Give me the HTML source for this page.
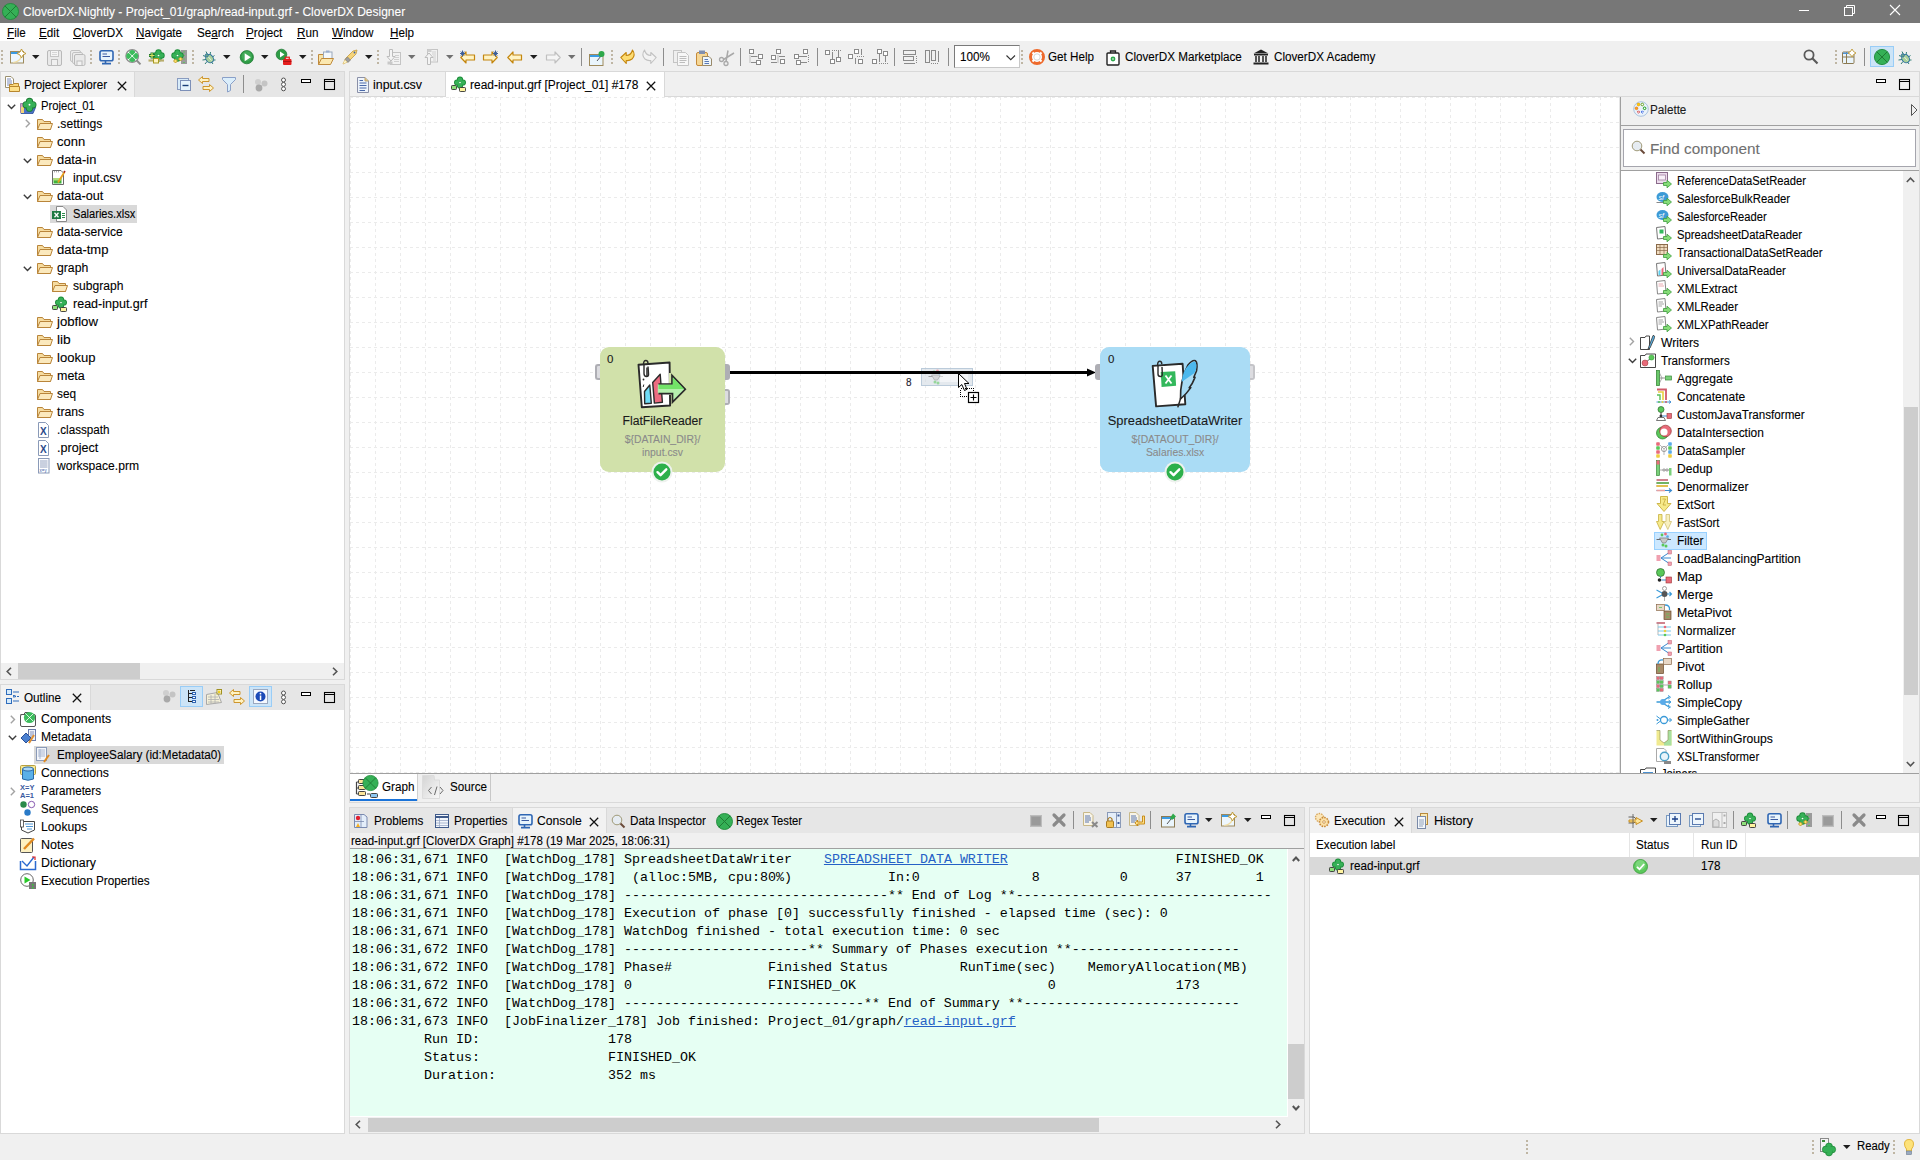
<!DOCTYPE html>
<html><head><meta charset="utf-8"><title>CloverDX Designer</title>
<style>
html,body{margin:0;padding:0;}
body{width:1920px;height:1160px;position:relative;overflow:hidden;background:#f0f0f0;font-family:"Liberation Sans",sans-serif;font-size:11.7px;color:#000;}
.t{position:absolute;white-space:pre;line-height:18px;height:18px;-webkit-text-stroke:0.1px currentColor;}
.lk{color:#2561c6;text-decoration:underline;}
.m{position:absolute;white-space:pre;font-family:"Liberation Mono",monospace;font-size:13.333px;line-height:18px;}
svg{position:absolute;overflow:visible;}
</style></head><body>

<div style="position:absolute;left:0px;top:0px;width:1920px;height:23px;background:#777777;"></div>
<div class="t" style="left:23px;top:3px;font-size:12px;color:#fff;">CloverDX-Nightly - Project_01/graph/read-input.grf - CloverDX Designer</div>
<div style="position:absolute;left:1799px;top:10px;width:10px;height:1px;background:#fff;"></div>
<svg style="position:absolute;left:1843px;top:4px;" width="14" height="14" viewBox="0 0 14 14"><rect x="1.5" y="3.5" width="8" height="8" fill="none" stroke="#fff"/><path d="M3.5 3.5V1.5h8v8h-2" fill="none" stroke="#fff"/></svg>
<svg style="position:absolute;left:1889px;top:4px;" width="13" height="13" viewBox="0 0 13 13"><path d="M1 1L11 11M11 1L1 11" stroke="#fff" stroke-width="1.1"/></svg>
<div style="position:absolute;left:0px;top:23px;width:1920px;height:18px;background:#fff;"></div>
<div class="t" style="left:7px;top:24px;font-size:12.3px;color:#000;transform:scaleX(0.95);transform-origin:0 0;"><u>F</u>ile</div>
<div class="t" style="left:39px;top:24px;font-size:12.3px;color:#000;transform:scaleX(0.95);transform-origin:0 0;"><u>E</u>dit</div>
<div class="t" style="left:73px;top:24px;font-size:12.3px;color:#000;transform:scaleX(0.95);transform-origin:0 0;"><u>C</u>loverDX</div>
<div class="t" style="left:136px;top:24px;font-size:12.3px;color:#000;transform:scaleX(0.95);transform-origin:0 0;"><u>N</u>avigate</div>
<div class="t" style="left:197px;top:24px;font-size:12.3px;color:#000;transform:scaleX(0.95);transform-origin:0 0;">Se<u>a</u>rch</div>
<div class="t" style="left:246px;top:24px;font-size:12.3px;color:#000;transform:scaleX(0.95);transform-origin:0 0;"><u>P</u>roject</div>
<div class="t" style="left:297px;top:24px;font-size:12.3px;color:#000;transform:scaleX(0.95);transform-origin:0 0;"><u>R</u>un</div>
<div class="t" style="left:332px;top:24px;font-size:12.3px;color:#000;transform:scaleX(0.95);transform-origin:0 0;"><u>W</u>indow</div>
<div class="t" style="left:390px;top:24px;font-size:12.3px;color:#000;transform:scaleX(0.95);transform-origin:0 0;"><u>H</u>elp</div>
<div style="position:absolute;left:1px;top:72px;width:343px;height:25px;background:#e6e6e6;"></div>
<div style="position:absolute;left:1px;top:72px;width:133px;height:25px;background:#f2f2f2;"></div>
<div style="position:absolute;left:134px;top:72px;width:1px;height:25px;background:#d9d9d9;"></div>
<div style="position:absolute;left:1px;top:97px;width:343px;height:566px;background:#fff;"></div>
<div style="position:absolute;left:1px;top:663px;width:343px;height:16px;background:#f0f0f0;"></div>
<div style="position:absolute;left:18px;top:663px;width:122px;height:16px;background:#cdcdcd;"></div>
<div style="position:absolute;left:0px;top:71px;width:345px;height:609px;box-sizing:border-box;border:1px solid #d9d9d9;"></div>
<div style="position:absolute;left:1px;top:685px;width:343px;height:25px;background:#e6e6e6;"></div>
<div style="position:absolute;left:1px;top:685px;width:89px;height:25px;background:#f2f2f2;"></div>
<div style="position:absolute;left:90px;top:685px;width:1px;height:25px;background:#d9d9d9;"></div>
<div style="position:absolute;left:1px;top:710px;width:343px;height:423px;background:#fff;"></div>
<div style="position:absolute;left:0px;top:684px;width:345px;height:450px;box-sizing:border-box;border:1px solid #d9d9d9;"></div>
<div style="position:absolute;left:350px;top:72px;width:1569px;height:25px;background:#f0f0f0;"></div>
<div style="position:absolute;left:446px;top:72px;width:218px;height:25px;background:#fff;"></div>
<div style="position:absolute;left:445px;top:72px;width:1px;height:25px;background:#d9d9d9;"></div>
<div style="position:absolute;left:664px;top:72px;width:1px;height:25px;background:#d9d9d9;"></div>
<div style="position:absolute;left:350px;top:96px;width:1569px;height:1px;background:#d9d9d9;"></div>
<div style="position:absolute;left:446px;top:96px;width:218px;height:1px;background:#fff;"></div>
<div style="position:absolute;left:349px;top:71px;width:1571px;height:732px;box-sizing:border-box;border:1px solid #d9d9d9;"></div>
<div style="position:absolute;left:350px;top:97px;width:1270px;height:676px;background:#fff;"></div>
<div style="position:absolute;left:350px;top:773px;width:1569px;height:1px;background:#a0a0a0;"></div>
<div style="position:absolute;left:1619px;top:97px;width:1px;height:676px;background:#e4e4e4;"></div>
<div style="position:absolute;left:1620px;top:97px;width:1px;height:676px;background:#a0a0a0;"></div>
<div style="position:absolute;left:1621px;top:97px;width:298px;height:28px;background:#f0f0f0;"></div>
<div style="position:absolute;left:1621px;top:125px;width:298px;height:1px;background:#a0a0a0;"></div>
<div style="position:absolute;left:1621px;top:126px;width:298px;height:44px;background:#f0f0f0;"></div>
<div style="position:absolute;left:1623px;top:129px;width:293px;height:38px;box-sizing:border-box;background:#fff;border:1px solid #a5a5ad;"></div>
<div style="position:absolute;left:1621px;top:170px;width:298px;height:1px;background:#a0a0a0;"></div>
<div style="position:absolute;left:1621px;top:171px;width:298px;height:602px;background:#fff;"></div>
<div style="position:absolute;left:1903px;top:171px;width:16px;height:602px;background:#f0f0f0;"></div>
<div style="position:absolute;left:1904px;top:407px;width:14px;height:288px;background:#cdcdcd;"></div>
<div style="position:absolute;left:350px;top:774px;width:1569px;height:28px;background:#f0f0f0;"></div>
<div style="position:absolute;left:350px;top:774px;width:67px;height:27px;background:#fff;"></div>
<div style="position:absolute;left:350px;top:799px;width:67px;height:2px;background:#1a73d9;"></div>
<div style="position:absolute;left:417px;top:774px;width:1px;height:27px;background:#d0d0d0;"></div>
<div style="position:absolute;left:490px;top:774px;width:1px;height:27px;background:#c8c8c8;"></div>
<div style="position:absolute;left:350px;top:808px;width:954px;height:25px;background:#e6e6e6;"></div>
<div style="position:absolute;left:513px;top:808px;width:93px;height:25px;background:#f2f2f2;"></div>
<div style="position:absolute;left:512px;top:808px;width:1px;height:25px;background:#d9d9d9;"></div>
<div style="position:absolute;left:606px;top:808px;width:1px;height:25px;background:#d9d9d9;"></div>
<div style="position:absolute;left:350px;top:833px;width:954px;height:15px;background:#f0f0f0;"></div>
<div style="position:absolute;left:350px;top:848px;width:954px;height:1px;background:#a0a0a0;"></div>
<div style="position:absolute;left:350px;top:849px;width:938px;height:268px;background:#fff;"></div>
<div style="position:absolute;left:350px;top:849px;width:937px;height:267px;background:#e6fff3;"></div>
<div style="position:absolute;left:1288px;top:849px;width:16px;height:268px;background:#f0f0f0;"></div>
<div style="position:absolute;left:1288px;top:1044px;width:16px;height:55px;background:#cdcdcd;"></div>
<div style="position:absolute;left:350px;top:1117px;width:954px;height:16px;background:#f0f0f0;"></div>
<div style="position:absolute;left:368px;top:1118px;width:731px;height:14px;background:#cdcdcd;"></div>
<div style="position:absolute;left:349px;top:807px;width:956px;height:327px;box-sizing:border-box;border:1px solid #d9d9d9;"></div>
<div style="position:absolute;left:1310px;top:808px;width:609px;height:25px;background:#e6e6e6;"></div>
<div style="position:absolute;left:1310px;top:808px;width:101px;height:25px;background:#f2f2f2;"></div>
<div style="position:absolute;left:1411px;top:808px;width:1px;height:25px;background:#d9d9d9;"></div>
<div style="position:absolute;left:1310px;top:833px;width:609px;height:300px;background:#fff;"></div>
<div style="position:absolute;left:1310px;top:857px;width:609px;height:18px;background:#d9d9d9;"></div>
<div style="position:absolute;left:1629px;top:833px;width:1px;height:24px;background:#e5e5e5;"></div>
<div style="position:absolute;left:1693px;top:833px;width:1px;height:24px;background:#e5e5e5;"></div>
<div style="position:absolute;left:1745px;top:833px;width:1px;height:24px;background:#e5e5e5;"></div>
<div style="position:absolute;left:1309px;top:807px;width:611px;height:327px;box-sizing:border-box;border:1px solid #d9d9d9;"></div>
<svg style="position:absolute;left:350px;top:97px;overflow:hidden;" width="1270" height="676" viewBox="0 0 1270 676"><path d="M0.5 0V676M25.5 0V676M50.5 0V676M75.5 0V676M100.5 0V676M125.5 0V676M150.5 0V676M175.5 0V676M200.5 0V676M225.5 0V676M250.5 0V676M275.5 0V676M300.5 0V676M325.5 0V676M350.5 0V676M375.5 0V676M400.5 0V676M425.5 0V676M450.5 0V676M475.5 0V676M500.5 0V676M525.5 0V676M550.5 0V676M575.5 0V676M600.5 0V676M625.5 0V676M650.5 0V676M675.5 0V676M700.5 0V676M725.5 0V676M750.5 0V676M775.5 0V676M800.5 0V676M825.5 0V676M850.5 0V676M875.5 0V676M900.5 0V676M925.5 0V676M950.5 0V676M975.5 0V676M1000.5 0V676M1025.5 0V676M1050.5 0V676M1075.5 0V676M1100.5 0V676M1125.5 0V676M1150.5 0V676M1175.5 0V676M1200.5 0V676M1225.5 0V676M1250.5 0V676" stroke="#ebebeb" stroke-width="1" stroke-dasharray="3 3" shape-rendering="crispEdges"/><path d="M0 0.5H1270M0 25.5H1270M0 50.5H1270M0 75.5H1270M0 100.5H1270M0 125.5H1270M0 150.5H1270M0 175.5H1270M0 200.5H1270M0 225.5H1270M0 250.5H1270M0 275.5H1270M0 300.5H1270M0 325.5H1270M0 350.5H1270M0 375.5H1270M0 400.5H1270M0 425.5H1270M0 450.5H1270M0 475.5H1270M0 500.5H1270M0 525.5H1270M0 550.5H1270M0 575.5H1270M0 600.5H1270M0 625.5H1270M0 650.5H1270M0 675.5H1270" stroke="#ebebeb" stroke-width="1" stroke-dasharray="3 3" shape-rendering="crispEdges"/></svg>
<div style="position:absolute;left:730px;top:371px;width:360px;height:3px;background:#000;"></div>
<svg style="position:absolute;left:1087px;top:368px;" width="10" height="10" viewBox="0 0 10 10"><path d="M0 0.5L9 4.5L0 8.5Z" fill="#000"/></svg>
<div class="t" style="left:906px;top:374px;font-size:10px;color:#1a1a30;">8</div>
<div style="position:absolute;left:595px;top:364px;width:5px;height:16px;box-sizing:border-box;background:#dcdce0;border:solid #aeaeb4;border-width:2px 0 2px 2px;border-radius:3px 0 0 3px;"></div>
<div style="position:absolute;left:725px;top:364px;width:5px;height:16px;background:#aeaeb4;border-radius:0 3px 3px 0;"></div>
<div style="position:absolute;left:725px;top:389px;width:5px;height:16px;box-sizing:border-box;background:#dcdce0;border:solid #aeaeb4;border-width:2px 2px 2px 0;border-radius:0 3px 3px 0;"></div>
<div style="position:absolute;left:600px;top:347px;width:125px;height:125px;background:#d1e1aa;border-radius:9px;"></div>
<div class="t" style="left:607px;top:350px;font-size:11.5px;color:#1a1a1a;">0</div>
<div class="t" style="left:600px;top:412px;font-size:12.3px;color:#1a1a1a;transform:scaleX(0.99);transform-origin:center;width:125px;text-align:center;">FlatFileReader</div>
<div class="t" style="left:600px;top:430px;font-size:11.4px;color:#8a8a8a;transform:scaleX(0.91);transform-origin:center;width:125px;text-align:center;">${DATAIN_DIR}/</div>
<div class="t" style="left:600px;top:443px;font-size:11.4px;color:#8a8a8a;transform:scaleX(0.91);transform-origin:center;width:125px;text-align:center;">input.csv</div>
<div style="position:absolute;left:1095px;top:364px;width:5px;height:16px;background:#aeaeb4;border-radius:3px 0 0 3px;"></div>
<div style="position:absolute;left:1250px;top:364px;width:5px;height:16px;box-sizing:border-box;background:#dcdce0;border:solid #c4c4c8;border-width:2px 2px 2px 0;border-radius:0 3px 3px 0;"></div>
<div style="position:absolute;left:1100px;top:347px;width:150px;height:125px;background:#aadcf5;border-radius:9px;"></div>
<div class="t" style="left:1108px;top:350px;font-size:11.5px;color:#1a1a1a;">0</div>
<div class="t" style="left:1100px;top:412px;font-size:12.9px;color:#1a1a1a;width:150px;text-align:center;">SpreadsheetDataWriter</div>
<div class="t" style="left:1100px;top:430px;font-size:11.4px;color:#8a8a8a;transform:scaleX(0.91);transform-origin:center;width:150px;text-align:center;">${DATAOUT_DIR}/</div>
<div class="t" style="left:1100px;top:443px;font-size:11.4px;color:#8a8a8a;transform:scaleX(0.91);transform-origin:center;width:150px;text-align:center;">Salaries.xlsx</div>
<svg style="position:absolute;left:651px;top:461px;" width="22" height="22" viewBox="0 0 22 22"><circle cx="11" cy="11" r="10.5" fill="#eef2ee"/><circle cx="11" cy="11" r="8.5" fill="#2db04b"/><path d="M6.5 11.2L9.6 14.2L15.3 8.3" fill="none" stroke="#fff" stroke-width="2.4" stroke-linecap="round" stroke-linejoin="round"/></svg>
<svg style="position:absolute;left:1164px;top:461px;" width="22" height="22" viewBox="0 0 22 22"><circle cx="11" cy="11" r="10.5" fill="#eef2ee"/><circle cx="11" cy="11" r="8.5" fill="#2db04b"/><path d="M6.5 11.2L9.6 14.2L15.3 8.3" fill="none" stroke="#fff" stroke-width="2.4" stroke-linecap="round" stroke-linejoin="round"/></svg>
<svg style="position:absolute;left:630px;top:355px;" width="64" height="56" viewBox="0 0 64 56">
<path d="M8.5 9.7L39.6 7.5L40.1 50.5L11.8 52.2Z" fill="#fff" stroke="#2a2a2a" stroke-width="1.9" stroke-linejoin="round"/>
<path d="M14.5 36.5L19.8 30L21.3 48.3L14.7 48.8Z" fill="#6fdcf7"/>
<path d="M22.7 27.5L30.2 19.3L30.9 28.5L32.4 47.3L24.4 48.1Z" fill="#ec6b80" stroke="#2a2a2a" stroke-width="1.4" stroke-linejoin="round"/>
<path d="M14.5 36.5L19.8 30L21.3 48.3L14.7 48.8Z" fill="none" stroke="#2a2a2a" stroke-width="1.4" stroke-linejoin="round"/>
<path d="M17 21.5V12.5" stroke="#2a2a2a" stroke-width="1.5" fill="none"/>
<path d="M14 9.5V18.5Q14 21.5 16.5 21.5Q19 21.5 18.5 18.5L18 11.5" stroke="#2a2a2a" stroke-width="1.4" fill="none"/>
<path d="M13.5 9.5Q13.5 5.5 15.8 5.5Q18 5.5 18 8.5" stroke="#2a2a2a" stroke-width="1.4" fill="none"/>
<rect x="39" y="18" width="4" height="22" fill="#d1e1aa"/>
<path d="M27.8 29H42V20.3L55.3 34.3L42.5 47.1V38.6H27.8Z" fill="#b6efae"/><path d="M28.5 29H42V20.3L55.3 34.3L42.5 47.1V38.6H28.5" fill="none" stroke="#2a2a2a" stroke-width="1.7" stroke-linejoin="miter"/>
<path d="M28.6 29.8H42.8V22.3L54 34H28.6Z" fill="#73e368"/>
<circle cx="13.5" cy="24.5" r="0.9" fill="#2a2a2a"/><path d="M13.8 29.5l-0.6 2.5" stroke="#2a2a2a" stroke-width="1"/>
</svg>
<svg style="position:absolute;left:1144px;top:355px;" width="64" height="56" viewBox="0 0 64 56">
<path d="M8.7 10.9L38.6 8.7L41.3 49.3L12.1 51.4Z" fill="#fff" stroke="#2a2a2a" stroke-width="1.9" stroke-linejoin="round"/>
<path d="M16.7 17.1L31.2 16.2L32.1 30.7L17.6 32.1Z" fill="#33b85c"/>
<path d="M21.5 20.5L27.5 28.5M27.5 20.5L21.5 28.5" stroke="#fff" stroke-width="1.8"/>
<path d="M14 10.5V19Q14 21.5 16.5 21.5Q18.5 21.5 18.3 19L18 12" stroke="#2a2a2a" stroke-width="1.4" fill="none"/>
<path d="M13.6 10.2Q13.6 6.3 15.8 6.3Q17.8 6.3 17.8 9.2" stroke="#2a2a2a" stroke-width="1.4" fill="none"/>
<path d="M36.5 44Q36 25 44 10Q48.5 4.5 51.5 5.8Q54 8 52.5 16L49.8 22.2L51 22.4Q48.5 29 45.2 32.8L46.8 32.6Q42 39.5 36.5 44Z" fill="#a8dcf5" stroke="#2a2a2a" stroke-width="1.6" stroke-linejoin="round"/>
<path d="M37.6 27Q39 15 44.5 10.2Q48.5 6 51 6.8Q53 8.5 52 14.5L50.5 18Z" fill="#4cb8ed"/>
<path d="M37 42L33.8 52.4" stroke="#2a2a2a" stroke-width="1.5"/>
</svg>
<div class="t" style="left:24px;top:76px;font-size:12.3px;color:#000;transform:scaleX(0.95);transform-origin:0 0;">Project Explorer</div>
<div class="t" style="left:24px;top:689px;font-size:12.3px;color:#000;transform:scaleX(0.95);transform-origin:0 0;">Outline</div>
<div class="t" style="left:373px;top:76px;font-size:12.3px;color:#000;transform:scaleX(1.01);transform-origin:0 0;">input.csv</div>
<div class="t" style="left:470px;top:76px;font-size:12.3px;color:#000;transform:scaleX(0.973);transform-origin:0 0;">read-input.grf [Project_01] #178</div>
<div class="t" style="left:1650px;top:101px;font-size:12.3px;color:#1a1a1a;transform:scaleX(0.95);transform-origin:0 0;">Palette</div>
<div class="t" style="left:1650px;top:139px;font-size:15.3px;color:#707070;line-height:20px;height:20px;">Find component</div>
<div class="t" style="left:382px;top:778px;font-size:12.3px;color:#000;transform:scaleX(0.95);transform-origin:0 0;">Graph</div>
<div class="t" style="left:450px;top:778px;font-size:12.3px;color:#000;transform:scaleX(0.95);transform-origin:0 0;">Source</div>
<div class="t" style="left:374px;top:812px;font-size:12.3px;color:#000;transform:scaleX(0.95);transform-origin:0 0;">Problems</div>
<div class="t" style="left:454px;top:812px;font-size:12.3px;color:#000;transform:scaleX(0.95);transform-origin:0 0;">Properties</div>
<div class="t" style="left:537px;top:812px;font-size:12.3px;color:#000;transform:scaleX(0.99);transform-origin:0 0;">Console</div>
<div class="t" style="left:630px;top:812px;font-size:12.3px;color:#000;transform:scaleX(0.95);transform-origin:0 0;">Data Inspector</div>
<div class="t" style="left:736px;top:812px;font-size:12.3px;color:#000;transform:scaleX(0.915);transform-origin:0 0;">Regex Tester</div>
<div class="t" style="left:351px;top:832px;font-size:12px;color:#000;transform:scaleX(0.962);transform-origin:0 0;">read-input.grf [CloverDX Graph] #178 (19 Mar 2025, 18:06:31)</div>
<div class="t" style="left:1334px;top:812px;font-size:12.3px;color:#000;transform:scaleX(0.95);transform-origin:0 0;">Execution</div>
<div class="t" style="left:1434px;top:812px;font-size:12.3px;color:#000;transform:scaleX(1.02);transform-origin:0 0;">History</div>
<div class="t" style="left:1316px;top:836px;font-size:12.3px;color:#000;transform:scaleX(0.95);transform-origin:0 0;">Execution label</div>
<div class="t" style="left:1636px;top:836px;font-size:12.3px;color:#000;transform:scaleX(0.95);transform-origin:0 0;">Status</div>
<div class="t" style="left:1701px;top:836px;font-size:12.3px;color:#000;transform:scaleX(0.95);transform-origin:0 0;">Run ID</div>
<div class="t" style="left:1350px;top:857px;font-size:12.3px;color:#000;transform:scaleX(0.95);transform-origin:0 0;">read-input.grf</div>
<div class="t" style="left:1701px;top:857px;font-size:12.3px;color:#000;transform:scaleX(0.95);transform-origin:0 0;">178</div>
<div class="t" style="left:1857px;top:1137px;font-size:12.3px;color:#000;transform:scaleX(0.92);transform-origin:0 0;">Ready</div>
<div class="t" style="left:41px;top:97px;font-size:12.3px;color:#000;transform:scaleX(0.916);transform-origin:0 0;">Project_01</div>
<div class="t" style="left:57px;top:115px;font-size:12.3px;color:#000;transform:scaleX(0.987);transform-origin:0 0;">.settings</div>
<div class="t" style="left:57px;top:133px;font-size:12.3px;color:#000;transform:scaleX(1.056);transform-origin:0 0;">conn</div>
<div class="t" style="left:57px;top:151px;font-size:12.3px;color:#000;transform:scaleX(1.045);transform-origin:0 0;">data-in</div>
<div class="t" style="left:73px;top:169px;font-size:12.3px;color:#000;transform:scaleX(1.003);transform-origin:0 0;">input.csv</div>
<div class="t" style="left:57px;top:187px;font-size:12.3px;color:#000;transform:scaleX(1.027);transform-origin:0 0;">data-out</div>
<div style="position:absolute;left:50px;top:205px;width:87px;height:18px;background:#d9d9d9;"></div>
<div class="t" style="left:73px;top:205px;font-size:12.3px;color:#000;transform:scaleX(0.902);transform-origin:0 0;">Salaries.xlsx</div>
<div class="t" style="left:57px;top:223px;font-size:12.3px;color:#000;transform:scaleX(0.98);transform-origin:0 0;">data-service</div>
<div class="t" style="left:57px;top:241px;font-size:12.3px;color:#000;transform:scaleX(1.061);transform-origin:0 0;">data-tmp</div>
<div class="t" style="left:57px;top:259px;font-size:12.3px;color:#000;transform:scaleX(0.992);transform-origin:0 0;">graph</div>
<div class="t" style="left:73px;top:277px;font-size:12.3px;color:#000;transform:scaleX(0.982);transform-origin:0 0;">subgraph</div>
<div class="t" style="left:73px;top:295px;font-size:12.3px;color:#000;transform:scaleX(1.018);transform-origin:0 0;">read-input.grf</div>
<div class="t" style="left:57px;top:313px;font-size:12.3px;color:#000;transform:scaleX(1.069);transform-origin:0 0;">jobflow</div>
<div class="t" style="left:57px;top:331px;font-size:12.3px;color:#000;transform:scaleX(1.12);transform-origin:0 0;">lib</div>
<div class="t" style="left:57px;top:349px;font-size:12.3px;color:#000;transform:scaleX(1.061);transform-origin:0 0;">lookup</div>
<div class="t" style="left:57px;top:367px;font-size:12.3px;color:#000;transform:scaleX(1.016);transform-origin:0 0;">meta</div>
<div class="t" style="left:57px;top:385px;font-size:12.3px;color:#000;transform:scaleX(0.96);transform-origin:0 0;">seq</div>
<div class="t" style="left:57px;top:403px;font-size:12.3px;color:#000;transform:scaleX(0.993);transform-origin:0 0;">trans</div>
<div class="t" style="left:57px;top:421px;font-size:12.3px;color:#000;transform:scaleX(0.948);transform-origin:0 0;">.classpath</div>
<div class="t" style="left:57px;top:439px;font-size:12.3px;color:#000;transform:scaleX(1.023);transform-origin:0 0;">.project</div>
<div class="t" style="left:57px;top:457px;font-size:12.3px;color:#000;transform:scaleX(0.984);transform-origin:0 0;">workspace.prm</div>
<div class="t" style="left:41px;top:710px;font-size:12.3px;color:#000;transform:scaleX(1.005);transform-origin:0 0;">Components</div>
<div class="t" style="left:41px;top:728px;font-size:12.3px;color:#000;transform:scaleX(0.983);transform-origin:0 0;">Metadata</div>
<div style="position:absolute;left:34px;top:746px;width:190px;height:18px;background:#d9d9d9;"></div>
<div class="t" style="left:57px;top:746px;font-size:12.3px;color:#000;transform:scaleX(0.953);transform-origin:0 0;">EmployeeSalary (id:Metadata0)</div>
<div class="t" style="left:41px;top:764px;font-size:12.3px;color:#000;transform:scaleX(0.993);transform-origin:0 0;">Connections</div>
<div class="t" style="left:41px;top:782px;font-size:12.3px;color:#000;transform:scaleX(0.944);transform-origin:0 0;">Parameters</div>
<div class="t" style="left:41px;top:800px;font-size:12.3px;color:#000;transform:scaleX(0.93);transform-origin:0 0;">Sequences</div>
<div class="t" style="left:41px;top:818px;font-size:12.3px;color:#000;transform:scaleX(0.994);transform-origin:0 0;">Lookups</div>
<div class="t" style="left:41px;top:836px;font-size:12.3px;color:#000;transform:scaleX(1.018);transform-origin:0 0;">Notes</div>
<div class="t" style="left:41px;top:854px;font-size:12.3px;color:#000;transform:scaleX(1.006);transform-origin:0 0;">Dictionary</div>
<div class="t" style="left:41px;top:872px;font-size:12.3px;color:#000;transform:scaleX(0.957);transform-origin:0 0;">Execution Properties</div>
<div class="t" style="left:1677px;top:172px;font-size:12.3px;color:#000;transform:scaleX(0.911);transform-origin:0 0;">ReferenceDataSetReader</div>
<div class="t" style="left:1677px;top:190px;font-size:12.3px;color:#000;transform:scaleX(0.924);transform-origin:0 0;">SalesforceBulkReader</div>
<div class="t" style="left:1677px;top:208px;font-size:12.3px;color:#000;transform:scaleX(0.911);transform-origin:0 0;">SalesforceReader</div>
<div class="t" style="left:1677px;top:226px;font-size:12.3px;color:#000;transform:scaleX(0.919);transform-origin:0 0;">SpreadsheetDataReader</div>
<div class="t" style="left:1677px;top:244px;font-size:12.3px;color:#000;transform:scaleX(0.921);transform-origin:0 0;">TransactionalDataSetReader</div>
<div class="t" style="left:1677px;top:262px;font-size:12.3px;color:#000;transform:scaleX(0.925);transform-origin:0 0;">UniversalDataReader</div>
<div class="t" style="left:1677px;top:280px;font-size:12.3px;color:#000;transform:scaleX(0.946);transform-origin:0 0;">XMLExtract</div>
<div class="t" style="left:1677px;top:298px;font-size:12.3px;color:#000;transform:scaleX(0.93);transform-origin:0 0;">XMLReader</div>
<div class="t" style="left:1677px;top:316px;font-size:12.3px;color:#000;transform:scaleX(0.923);transform-origin:0 0;">XMLXPathReader</div>
<div class="t" style="left:1661px;top:334px;font-size:12.3px;color:#000;transform:scaleX(0.983);transform-origin:0 0;">Writers</div>
<div class="t" style="left:1661px;top:352px;font-size:12.3px;color:#000;transform:scaleX(0.946);transform-origin:0 0;">Transformers</div>
<div class="t" style="left:1677px;top:370px;font-size:12.3px;color:#000;transform:scaleX(0.985);transform-origin:0 0;">Aggregate</div>
<div class="t" style="left:1677px;top:388px;font-size:12.3px;color:#000;transform:scaleX(0.978);transform-origin:0 0;">Concatenate</div>
<div class="t" style="left:1677px;top:406px;font-size:12.3px;color:#000;transform:scaleX(0.947);transform-origin:0 0;">CustomJavaTransformer</div>
<div class="t" style="left:1677px;top:424px;font-size:12.3px;color:#000;transform:scaleX(0.97);transform-origin:0 0;">DataIntersection</div>
<div class="t" style="left:1677px;top:442px;font-size:12.3px;color:#000;transform:scaleX(0.948);transform-origin:0 0;">DataSampler</div>
<div class="t" style="left:1677px;top:460px;font-size:12.3px;color:#000;transform:scaleX(0.982);transform-origin:0 0;">Dedup</div>
<div class="t" style="left:1677px;top:478px;font-size:12.3px;color:#000;transform:scaleX(0.978);transform-origin:0 0;">Denormalizer</div>
<div class="t" style="left:1677px;top:496px;font-size:12.3px;color:#000;transform:scaleX(0.925);transform-origin:0 0;">ExtSort</div>
<div class="t" style="left:1677px;top:514px;font-size:12.3px;color:#000;transform:scaleX(0.911);transform-origin:0 0;">FastSort</div>
<div style="position:absolute;left:1654px;top:532px;width:53px;height:18px;box-sizing:border-box;background:#cce8ff;border:1px solid #99d1ff;"></div>
<div class="t" style="left:1677px;top:532px;font-size:12.3px;color:#000;transform:scaleX(0.97);transform-origin:0 0;">Filter</div>
<div class="t" style="left:1677px;top:550px;font-size:12.3px;color:#000;transform:scaleX(0.978);transform-origin:0 0;">LoadBalancingPartition</div>
<div class="t" style="left:1677px;top:568px;font-size:12.3px;color:#000;transform:scaleX(1.057);transform-origin:0 0;">Map</div>
<div class="t" style="left:1677px;top:586px;font-size:12.3px;color:#000;transform:scaleX(1.032);transform-origin:0 0;">Merge</div>
<div class="t" style="left:1677px;top:604px;font-size:12.3px;color:#000;transform:scaleX(1.002);transform-origin:0 0;">MetaPivot</div>
<div class="t" style="left:1677px;top:622px;font-size:12.3px;color:#000;transform:scaleX(0.985);transform-origin:0 0;">Normalizer</div>
<div class="t" style="left:1677px;top:640px;font-size:12.3px;color:#000;transform:scaleX(1.01);transform-origin:0 0;">Partition</div>
<div class="t" style="left:1677px;top:658px;font-size:12.3px;color:#000;transform:scaleX(1.005);transform-origin:0 0;">Pivot</div>
<div class="t" style="left:1677px;top:676px;font-size:12.3px;color:#000;transform:scaleX(1.007);transform-origin:0 0;">Rollup</div>
<div class="t" style="left:1677px;top:694px;font-size:12.3px;color:#000;transform:scaleX(0.98);transform-origin:0 0;">SimpleCopy</div>
<div class="t" style="left:1677px;top:712px;font-size:12.3px;color:#000;transform:scaleX(0.962);transform-origin:0 0;">SimpleGather</div>
<div class="t" style="left:1677px;top:730px;font-size:12.3px;color:#000;transform:scaleX(0.987);transform-origin:0 0;">SortWithinGroups</div>
<div class="t" style="left:1677px;top:748px;font-size:12.3px;color:#000;transform:scaleX(0.925);transform-origin:0 0;">XSLTransformer</div>
<div class="m" style="left:352px;top:851px;width:936px;height:266px;overflow:hidden;color:#000;">18:06:31,671 INFO  [WatchDog_178] SpreadsheetDataWriter    <span class="lk">SPREADSHEET_DATA_WRITER</span>                     FINISHED_OK
18:06:31,671 INFO  [WatchDog_178]  (alloc:5MB, cpu:80%)            In:0              8          0      37        1
18:06:31,671 INFO  [WatchDog_178] ---------------------------------** End of Log **--------------------------------
18:06:31,671 INFO  [WatchDog_178] Execution of phase [0] successfully finished - elapsed time (sec): 0
18:06:31,671 INFO  [WatchDog_178] WatchDog finished - total execution time: 0 sec
18:06:31,672 INFO  [WatchDog_178] -----------------------** Summary of Phases execution **---------------------
18:06:31,672 INFO  [WatchDog_178] Phase#            Finished Status         RunTime(sec)    MemoryAllocation(MB)
18:06:31,672 INFO  [WatchDog_178] 0                 FINISHED_OK                        0               173
18:06:31,672 INFO  [WatchDog_178] ------------------------------** End of Summary **---------------------------
18:06:31,673 INFO  [JobFinalizer_178] Job finished: Project_01/graph/<span class="lk">read-input.grf</span>
         Run ID:                178
         Status:                FINISHED_OK
         Duration:              352 ms</div>
<svg style="position:absolute;left:2px;top:49px;" width="16" height="16" viewBox="0 0 16 16"><rect x="-1" y="1" width="2" height="2" fill="#bfb6a4"/><rect x="-1" y="5" width="2" height="2" fill="#bfb6a4"/><rect x="-1" y="9" width="2" height="2" fill="#bfb6a4"/><rect x="-1" y="13" width="2" height="2" fill="#bfb6a4"/></svg>
<svg style="position:absolute;left:10px;top:49px;" width="16" height="16" viewBox="0 0 16 16"><rect x="0.5" y="2.5" width="13" height="11.5" fill="#eef7fe" stroke="#9e8a5c"/><rect x="1" y="3" width="12" height="2" fill="#3b9be3"/><path d="M3 13.5Q10 13 12 6" stroke="#f0dca0" stroke-width="1.2" fill="none"/><path d="M11.5 0L13 3L16 4.5L13 6L11.5 9L10 6L7 4.5L10 3Z" fill="#fff" stroke="#c09a35" stroke-width="1"/></svg>
<svg style="position:absolute;left:32px;top:55px;" width="16" height="16" viewBox="0 0 16 16"><path d="M0 0H7.5L3.75 4Z" fill="#1e1e1e"/></svg>
<svg style="position:absolute;left:47px;top:50px;" width="16" height="16" viewBox="0 0 16 16"><rect x="0.5" y="0.5" width="14" height="15" rx="1.5" fill="#e9e9e9" stroke="#b9b9b9"/><rect x="3.5" y="0.5" width="8" height="6" fill="#f5f5f5" stroke="#c4c4c4"/><path d="M5 2.5H10M5 4.5H10" stroke="#d6d6d6"/><rect x="4.5" y="9.5" width="6" height="6" fill="#f0f0f0" stroke="#bdbdbd"/></svg>
<svg style="position:absolute;left:70px;top:50px;" width="16" height="16" viewBox="0 0 16 16"><rect x="0.5" y="0.5" width="10" height="11" rx="1.5" fill="#ececec" stroke="#c2c2c2"/><rect x="2.5" y="2.5" width="10" height="11" rx="1.5" fill="#ececec" stroke="#c2c2c2"/><rect x="4.5" y="4.5" width="10.5" height="11" rx="1.5" fill="#e9e9e9" stroke="#b9b9b9"/><rect x="7" y="11" width="5" height="4.5" fill="#f2f2f2" stroke="#bdbdbd"/></svg>
<svg style="position:absolute;left:91px;top:49px;" width="16" height="16" viewBox="0 0 16 16"><rect x="-1" y="1" width="2" height="2" fill="#bfb6a4"/><rect x="-1" y="5" width="2" height="2" fill="#bfb6a4"/><rect x="-1" y="9" width="2" height="2" fill="#bfb6a4"/><rect x="-1" y="13" width="2" height="2" fill="#bfb6a4"/></svg>
<svg style="position:absolute;left:99px;top:50px;" width="16" height="16" viewBox="0 0 16 16"><rect x="1" y="0.8" width="13" height="10" rx="1.8" fill="#e8f4fc" stroke="#2f66b3" stroke-width="1.6"/><path d="M3.5 4H8M3.5 6.5H11" stroke="#3a5aa0" stroke-width="1"/><path d="M6.5 11V13M3 13.6H12" stroke="#2f66b3" stroke-width="1.6"/></svg>
<svg style="position:absolute;left:119px;top:49px;" width="16" height="16" viewBox="0 0 16 16"><rect x="-1" y="1" width="2" height="2" fill="#bfb6a4"/><rect x="-1" y="5" width="2" height="2" fill="#bfb6a4"/><rect x="-1" y="9" width="2" height="2" fill="#bfb6a4"/><rect x="-1" y="13" width="2" height="2" fill="#bfb6a4"/></svg>
<svg style="position:absolute;left:125px;top:49px;" width="16" height="16" viewBox="0 0 16 16"><circle cx="7.2" cy="7" r="6.3" fill="#fff" stroke="#8c8c8c" stroke-width="1.3"/><circle cx="7.20" cy="4.22" r="3.02" fill="#3cbc5c"/><circle cx="9.98" cy="7.00" r="3.02" fill="#3cbc5c"/><circle cx="7.20" cy="9.78" r="3.02" fill="#3cbc5c"/><circle cx="4.42" cy="7.00" r="3.02" fill="#3cbc5c"/><circle cx="7.20" cy="4.22" r="3.02" fill="#3cbc5c"/><circle cx="9.98" cy="7.00" r="3.02" fill="#3cbc5c"/><circle cx="7.20" cy="9.78" r="3.02" fill="#3cbc5c"/><circle cx="4.42" cy="7.00" r="3.02" fill="#3cbc5c"/><circle cx="7.20" cy="7.00" r="0.81" fill="#fff"/><path d="M3.5 3.3L10.9 10.7M10.9 3.3L3.5 10.7" stroke="#fff" stroke-width="0.8"/><path d="M11.5 11.3L15.5 15.4" stroke="#8c8c8c" stroke-width="2"/></svg>
<svg style="position:absolute;left:148px;top:49px;" width="16" height="16" viewBox="0 0 16 16"><circle cx="10.50" cy="3.52" r="3.22" fill="#1d8d39"/><circle cx="13.48" cy="6.50" r="3.22" fill="#1d8d39"/><circle cx="10.50" cy="9.48" r="3.22" fill="#1d8d39"/><circle cx="7.52" cy="6.50" r="3.22" fill="#1d8d39"/><circle cx="10.50" cy="3.52" r="2.32" fill="#37b158"/><circle cx="13.48" cy="6.50" r="2.32" fill="#37b158"/><circle cx="10.50" cy="9.48" r="2.32" fill="#37b158"/><circle cx="7.52" cy="6.50" r="2.32" fill="#37b158"/><circle cx="10.50" cy="6.50" r="0.87" fill="#fff"/><path d="M0.5 11.5H16" stroke="#b9ad6d" stroke-width="2.2"/><rect x="5.5" y="9.5" width="5" height="4.5" fill="#fff4c0" stroke="#a89a20"/><path d="M4 3.5V9.5M1 6.5H7" stroke="#1d7a30" stroke-width="3"/><path d="M4 4V9M1.5 6.5H6.5" stroke="#d8e060" stroke-width="1.2"/></svg>
<svg style="position:absolute;left:171px;top:49px;" width="16" height="16" viewBox="0 0 16 16"><rect x="10" y="1" width="6" height="14" fill="#9b9b9b"/><rect x="12.5" y="2.5" width="1" height="1" fill="#33dd33"/><rect x="12.5" y="6" width="1" height="1" fill="#33dd33"/><rect x="12.5" y="9.5" width="1" height="1" fill="#33dd33"/><rect x="12.5" y="13" width="1" height="1" fill="#33dd33"/><circle cx="6.50" cy="3.52" r="3.22" fill="#1d8d39"/><circle cx="9.48" cy="6.50" r="3.22" fill="#1d8d39"/><circle cx="6.50" cy="9.48" r="3.22" fill="#1d8d39"/><circle cx="3.52" cy="6.50" r="3.22" fill="#1d8d39"/><circle cx="6.50" cy="3.52" r="2.32" fill="#37b158"/><circle cx="9.48" cy="6.50" r="2.32" fill="#37b158"/><circle cx="6.50" cy="9.48" r="2.32" fill="#37b158"/><circle cx="3.52" cy="6.50" r="2.32" fill="#37b158"/><circle cx="6.50" cy="6.50" r="0.87" fill="#fff"/><path d="M4.5 10L6.5 12L4.5 14L2.5 12Z" fill="#ffe066" stroke="#b8901c" stroke-width="0.8"/><path d="M9.5 8L11.5 10L9.5 12L7.5 10Z" fill="#ffe066" stroke="#b8901c" stroke-width="0.8"/></svg>
<svg style="position:absolute;left:193px;top:49px;" width="16" height="16" viewBox="0 0 16 16"><rect x="-1" y="1" width="2" height="2" fill="#bfb6a4"/><rect x="-1" y="5" width="2" height="2" fill="#bfb6a4"/><rect x="-1" y="9" width="2" height="2" fill="#bfb6a4"/><rect x="-1" y="13" width="2" height="2" fill="#bfb6a4"/></svg>
<svg style="position:absolute;left:201px;top:50px;" width="16" height="16" viewBox="0 0 16 16"><path d="M2 5.5L4.5 6.5M1.5 10L5 9.5M4 14L6 11.5M5 1.5L6.5 4.5M9.5 2L9 5M13.5 5.5L11.5 7M14.5 10L12 10M12 14L10.5 12" stroke="#2f7e76" stroke-width="1"/><ellipse cx="8.6" cy="8.6" rx="3.6" ry="4.4" transform="rotate(-35 8.6 8.6)" fill="#a9cf9a" stroke="#2b6fa0" stroke-width="1"/><path d="M7 6.5L10.5 10.5" stroke="#e8f4e0" stroke-width="1"/><circle cx="5.8" cy="5.4" r="1.6" fill="#6aa38a" stroke="#2b6fa0" stroke-width="0.8"/></svg>
<svg style="position:absolute;left:223px;top:55px;" width="16" height="16" viewBox="0 0 16 16"><path d="M0 0H7.5L3.75 4Z" fill="#1e1e1e"/></svg>
<svg style="position:absolute;left:240px;top:50px;" width="16" height="16" viewBox="0 0 16 16"><circle cx="6.8" cy="7.2" r="6.6" fill="#2e9c45" stroke="#1f7a34" stroke-width="0.8"/><circle cx="6.8" cy="6.2" r="5" fill="#54b76a" opacity="0.5"/><path d="M4.7 3.2L10.8 7.2L4.7 11.2Z" fill="#fff"/></svg>
<svg style="position:absolute;left:261px;top:55px;" width="16" height="16" viewBox="0 0 16 16"><path d="M0 0H7.5L3.75 4Z" fill="#1e1e1e"/></svg>
<svg style="position:absolute;left:276px;top:49px;" width="16" height="16" viewBox="0 0 16 16"><circle cx="5.5" cy="5.5" r="5.3" fill="#2e9c45" stroke="#1f7a34" stroke-width="0.8"/><path d="M4 2.5L8.5 5.5L4 8.5Z" fill="#fff"/><rect x="7" y="10" width="8.5" height="6" rx="1" fill="#e51d1d"/><rect x="9.3" y="8.2" width="4" height="2.2" fill="none" stroke="#e51d1d" stroke-width="1.2"/><path d="M7 12.5H15.5" stroke="#a01010" stroke-width="0.8"/></svg>
<svg style="position:absolute;left:299px;top:55px;" width="16" height="16" viewBox="0 0 16 16"><path d="M0 0H7.5L3.75 4Z" fill="#1e1e1e"/></svg>
<svg style="position:absolute;left:312px;top:49px;" width="16" height="16" viewBox="0 0 16 16"><rect x="-1" y="1" width="2" height="2" fill="#bfb6a4"/><rect x="-1" y="5" width="2" height="2" fill="#bfb6a4"/><rect x="-1" y="9" width="2" height="2" fill="#bfb6a4"/><rect x="-1" y="13" width="2" height="2" fill="#bfb6a4"/></svg>
<svg style="position:absolute;left:318px;top:50px;" width="16" height="16" viewBox="0 0 16 16"><path d="M0.5 4.5H5L6 3.5H9.5V14.5H0.5Z" fill="#f7e3a8" stroke="#c08a3c"/><rect x="5.5" y="2" width="8.5" height="7" fill="#f4f8fc" stroke="#9aa8bc"/><rect x="8" y="0.5" width="3.5" height="2" fill="#9aaed0"/><path d="M0.5 14.5L3.5 8.5H15.5L12.5 14.5Z" fill="#fbe8b0" stroke="#c08a3c"/></svg>
<svg style="position:absolute;left:342px;top:49px;" width="16" height="16" viewBox="0 0 16 16"><path d="M1 15L4 9L11 2L15 1L14 5L7 12Z" fill="#f6d47a" stroke="#c59a3a" stroke-width="0.8"/><path d="M3 10.5L6 13.5L8.5 11L5.5 8Z" fill="#9e9e9e" stroke="#777" stroke-width="0.6"/><circle cx="12.5" cy="3.5" r="0.9" fill="#3a62a8"/><path d="M1 15L3 11L5 13Z" fill="#fff6c8"/></svg>
<svg style="position:absolute;left:365px;top:55px;" width="16" height="16" viewBox="0 0 16 16"><path d="M0 0H7.5L3.75 4Z" fill="#1e1e1e"/></svg>
<svg style="position:absolute;left:378px;top:49px;" width="16" height="16" viewBox="0 0 16 16"><rect x="-1" y="1" width="2" height="2" fill="#bfb6a4"/><rect x="-1" y="5" width="2" height="2" fill="#bfb6a4"/><rect x="-1" y="9" width="2" height="2" fill="#bfb6a4"/><rect x="-1" y="13" width="2" height="2" fill="#bfb6a4"/></svg>
<svg style="position:absolute;left:386px;top:49px;" width="16" height="16" viewBox="0 0 16 16"><rect x="4.5" y="3.5" width="10" height="12" fill="#f2f2f2" stroke="#c4c4c4"/><path d="M9 6.5H13M9 8.5H13M8 10.5H13M8 12.5H13" stroke="#d0d0d0"/><rect x="1.5" y="12.5" width="5" height="3" fill="#c8c8c8"/><path d="M3.5 0.5H6.5V7.5H9L5 12L1 7.5H3.5Z" fill="#f4f4f4" stroke="#bcbcbc"/></svg>
<svg style="position:absolute;left:408px;top:55px;" width="16" height="16" viewBox="0 0 16 16"><path d="M0 0H7.5L3.75 4Z" fill="#707070"/></svg>
<svg style="position:absolute;left:424px;top:49px;" width="16" height="16" viewBox="0 0 16 16"><rect x="3.5" y="0.5" width="10" height="12.5" fill="#f2f2f2" stroke="#c4c4c4"/><rect x="3.5" y="0.5" width="4" height="2.5" fill="#cfcfcf"/><path d="M8 3H12M8 5H12M9 7H12M9 9H12M9 11H12" stroke="#d0d0d0"/><path d="M3.5 15.5H6.5V8.5H9L5 4L1 8.5H3.5Z" fill="#f4f4f4" stroke="#bcbcbc"/></svg>
<svg style="position:absolute;left:446px;top:55px;" width="16" height="16" viewBox="0 0 16 16"><path d="M0 0H7.5L3.75 4Z" fill="#707070"/></svg>
<svg style="position:absolute;left:460px;top:50px;" width="16" height="16" viewBox="0 0 16 16"><path d="M0.8 7.5L6 2V5H14.5V10H6V13Z" fill="#fff3c4" stroke="#c4860e" stroke-width="1.2" stroke-linejoin="round"/><path d="M2.5 0.5V6.5M0 3.5H5M0.8 1.5L4.2 5.5M4.2 1.5L0.8 5.5" stroke="#3b5e9a" stroke-width="1"/></svg>
<svg style="position:absolute;left:482px;top:50px;" width="16" height="16" viewBox="0 0 16 16"><path d="M15.2 7.5L10 2V5H1.5V10H10V13Z" fill="#fff3c4" stroke="#c4860e" stroke-width="1.2" stroke-linejoin="round"/><path d="M13.5 0.5V6.5M11 3.5H16M11.8 1.5L15.2 5.5M15.2 1.5L11.8 5.5" stroke="#3b5e9a" stroke-width="1"/></svg>
<svg style="position:absolute;left:507px;top:50px;" width="16" height="16" viewBox="0 0 16 16"><path d="M0.8 7.5L6 2V5H14.5V10H6V13Z" fill="#fff3c4" stroke="#c4860e" stroke-width="1.2" stroke-linejoin="round"/></svg>
<svg style="position:absolute;left:530px;top:55px;" width="16" height="16" viewBox="0 0 16 16"><path d="M0 0H7.5L3.75 4Z" fill="#1e1e1e"/></svg>
<svg style="position:absolute;left:545px;top:50px;" width="16" height="16" viewBox="0 0 16 16"><path d="M15.2 7.5L10 2V5H1.5V10H10V13Z" fill="#f5f5f5" stroke="#c0c0c0" stroke-width="1.2" stroke-linejoin="round"/></svg>
<svg style="position:absolute;left:568px;top:55px;" width="16" height="16" viewBox="0 0 16 16"><path d="M0 0H7.5L3.75 4Z" fill="#707070"/></svg>
<svg style="position:absolute;left:581px;top:48px;" width="16" height="16" viewBox="0 0 16 16"><rect x="0" y="0" width="1" height="18" fill="#8d8d8d"/></svg>
<svg style="position:absolute;left:589px;top:50px;" width="16" height="16" viewBox="0 0 16 16"><rect x="0.5" y="4.5" width="13.5" height="11" fill="#eaf5fc" stroke="#9e8a5c"/><rect x="1" y="5" width="12.5" height="2" fill="#3b9be3"/><path d="M8 11L12 6" stroke="#555" stroke-width="1"/><circle cx="12.5" cy="4" r="3" fill="#2ea84a"/></svg>
<svg style="position:absolute;left:612px;top:49px;" width="16" height="16" viewBox="0 0 16 16"><rect x="-1" y="1" width="2" height="2" fill="#bfb6a4"/><rect x="-1" y="5" width="2" height="2" fill="#bfb6a4"/><rect x="-1" y="9" width="2" height="2" fill="#bfb6a4"/><rect x="-1" y="13" width="2" height="2" fill="#bfb6a4"/></svg>
<svg style="position:absolute;left:620px;top:49px;" width="16" height="16" viewBox="0 0 16 16"><path d="M0.8 8.5L6.2 3.5V6.5Q11 6.5 12.5 1Q16 6 12 10Q9.5 12 6.2 11.5V14.5Z" fill="#fddc72" stroke="#c4860e" stroke-width="1.1" stroke-linejoin="round"/></svg>
<svg style="position:absolute;left:641px;top:49px;" width="16" height="16" viewBox="0 0 16 16"><path d="M15.2 8.5L9.8 3.5V6.5Q5 6.5 3.5 1Q0 6 4 10Q6.5 12 9.8 11.5V14.5Z" fill="#f3f3f3" stroke="#c2c2c2" stroke-width="1.1" stroke-linejoin="round"/></svg>
<svg style="position:absolute;left:663px;top:48px;" width="16" height="16" viewBox="0 0 16 16"><rect x="0" y="0" width="1" height="18" fill="#8d8d8d"/></svg>
<svg style="position:absolute;left:673px;top:50px;" width="16" height="16" viewBox="0 0 16 16"><rect x="0.5" y="0.5" width="8" height="12" fill="#efefef" stroke="#c4c4c4"/><path d="M4.5 2.5H12.5L15.5 5.5V15.5H4.5Z" fill="#f7f7f7" stroke="#c4c4c4"/><path d="M6.5 6.5H13.5M6.5 8.5H13.5M6.5 10.5H13.5M6.5 12.5H12" stroke="#bdbdbd"/></svg>
<svg style="position:absolute;left:696px;top:50px;" width="16" height="16" viewBox="0 0 16 16"><rect x="0.5" y="2.5" width="11" height="13" rx="1.5" fill="#f6d796" stroke="#c48a3a"/><rect x="3" y="0.5" width="6" height="3.5" fill="#7f8fb0"/><path d="M6.5 6.5H13L15.5 9V15.5H6.5Z" fill="#eef6fb" stroke="#9a8a6a"/><path d="M8.5 9.5H12M8.5 11.5H13M8.5 13.5H13" stroke="#5a7ab8"/></svg>
<svg style="position:absolute;left:719px;top:50px;" width="16" height="16" viewBox="0 0 16 16"><circle cx="2.5" cy="9.5" r="2" fill="none" stroke="#a9a9a9" stroke-width="1.3"/><circle cx="7" cy="13.5" r="2" fill="none" stroke="#a9a9a9" stroke-width="1.3"/><path d="M4.5 9.5L15 3M7 11.5L9 0.5" stroke="#a9a9a9" stroke-width="1.5"/></svg>
<svg style="position:absolute;left:740px;top:48px;" width="16" height="16" viewBox="0 0 16 16"><rect x="0" y="0" width="1" height="18" fill="#8d8d8d"/></svg>
<svg style="position:absolute;left:749px;top:49px;" width="16" height="16" viewBox="0 0 16 16"><rect x="0.5" y="0.5" width="4" height="4" fill="#fff" stroke="#8a8a8a" stroke-width="1"/><rect x="9.5" y="5.5" width="4" height="4" fill="#fff" stroke="#8a8a8a" stroke-width="1"/><rect x="7.5" y="11.5" width="4" height="4" fill="#fff" stroke="#8a8a8a" stroke-width="1"/><path d="M1 6.5V14" stroke="#8a8a8a" stroke-dasharray="1 1"/><path d="M2 7.5H8.5M2 13.5H7" stroke="#8a8a8a"/></svg>
<svg style="position:absolute;left:771px;top:49px;" width="16" height="16" viewBox="0 0 16 16"><rect x="5.5" y="0.5" width="4" height="4" fill="#fff" stroke="#8a8a8a" stroke-width="1"/><rect x="0.5" y="6.5" width="4" height="4" fill="#fff" stroke="#8a8a8a" stroke-width="1"/><rect x="9.5" y="10.5" width="4" height="4" fill="#fff" stroke="#8a8a8a" stroke-width="1"/><path d="M7 6.5V14" stroke="#8a8a8a" stroke-dasharray="1 1"/><path d="M8 7.5H14M0 13.5H6" stroke="#8a8a8a"/></svg>
<svg style="position:absolute;left:794px;top:49px;" width="16" height="16" viewBox="0 0 16 16"><rect x="9.5" y="0.5" width="4" height="4" fill="#fff" stroke="#8a8a8a" stroke-width="1"/><rect x="0.5" y="5.5" width="4" height="4" fill="#fff" stroke="#8a8a8a" stroke-width="1"/><rect x="2.5" y="11.5" width="4" height="4" fill="#fff" stroke="#8a8a8a" stroke-width="1"/><path d="M14.5 6V14" stroke="#8a8a8a" stroke-dasharray="1 1"/><path d="M5 7.5H13M7 13.5H13" stroke="#8a8a8a"/></svg>
<svg style="position:absolute;left:817px;top:48px;" width="16" height="16" viewBox="0 0 16 16"><rect x="0" y="0" width="1" height="18" fill="#8d8d8d"/></svg>
<svg style="position:absolute;left:825px;top:49px;" width="16" height="16" viewBox="0 0 16 16"><rect x="0.5" y="1.5" width="4" height="4" fill="#fff" stroke="#8a8a8a" stroke-width="1"/><rect x="5.5" y="10.5" width="4" height="4" fill="#fff" stroke="#8a8a8a" stroke-width="1"/><rect x="11.5" y="8.5" width="4" height="4" fill="#fff" stroke="#8a8a8a" stroke-width="1"/><path d="M7 1.5H16" stroke="#8a8a8a" stroke-dasharray="1 1"/><path d="M7.5 3V10M13.5 2V8" stroke="#8a8a8a"/></svg>
<svg style="position:absolute;left:848px;top:49px;" width="16" height="16" viewBox="0 0 16 16"><rect x="6.5" y="0.5" width="4" height="4" fill="#fff" stroke="#8a8a8a" stroke-width="1"/><rect x="0.5" y="5.5" width="4" height="4" fill="#fff" stroke="#8a8a8a" stroke-width="1"/><rect x="10.5" y="10.5" width="4" height="4" fill="#fff" stroke="#8a8a8a" stroke-width="1"/><path d="M9 7.5H16" stroke="#8a8a8a" stroke-dasharray="1 1"/><path d="M13.5 0V6M7.5 9V15" stroke="#8a8a8a"/></svg>
<svg style="position:absolute;left:872px;top:49px;" width="16" height="16" viewBox="0 0 16 16"><rect x="5.5" y="0.5" width="4" height="4" fill="#fff" stroke="#8a8a8a" stroke-width="1"/><rect x="11.5" y="2.5" width="4" height="4" fill="#fff" stroke="#8a8a8a" stroke-width="1"/><rect x="0.5" y="10.5" width="4" height="4" fill="#fff" stroke="#8a8a8a" stroke-width="1"/><path d="M7 14.5H16" stroke="#8a8a8a" stroke-dasharray="1 1"/><path d="M7.5 5V13M13.5 7V13" stroke="#8a8a8a"/></svg>
<svg style="position:absolute;left:894px;top:48px;" width="16" height="16" viewBox="0 0 16 16"><rect x="0" y="0" width="1" height="18" fill="#8d8d8d"/></svg>
<svg style="position:absolute;left:903px;top:50px;" width="16" height="16" viewBox="0 0 16 16"><rect x="0.5" y="0.5" width="12" height="4" fill="none" stroke="#8a8a8a" stroke-width="1"/><rect x="0.5" y="6.5" width="10" height="4" fill="none" stroke="#8a8a8a" stroke-width="1"/><path d="M1 13.5H12" stroke="#8a8a8a"/><path d="M13.5 6V14" stroke="#8a8a8a" stroke-dasharray="1 1"/></svg>
<svg style="position:absolute;left:925px;top:50px;" width="16" height="16" viewBox="0 0 16 16"><rect x="0.5" y="0.5" width="4" height="12" fill="none" stroke="#8a8a8a" stroke-width="1"/><rect x="6.5" y="0.5" width="4" height="10" fill="none" stroke="#8a8a8a" stroke-width="1"/><path d="M13.5 1V12" stroke="#8a8a8a"/><path d="M6 13.5H14" stroke="#8a8a8a" stroke-dasharray="1 1"/></svg>
<svg style="position:absolute;left:948px;top:48px;" width="16" height="16" viewBox="0 0 16 16"><rect x="0" y="0" width="1" height="18" fill="#8d8d8d"/></svg>
<svg style="position:absolute;left:1022px;top:49px;" width="16" height="16" viewBox="0 0 16 16"><rect x="-1" y="1" width="2" height="2" fill="#bfb6a4"/><rect x="-1" y="5" width="2" height="2" fill="#bfb6a4"/><rect x="-1" y="9" width="2" height="2" fill="#bfb6a4"/><rect x="-1" y="13" width="2" height="2" fill="#bfb6a4"/></svg>
<svg style="position:absolute;left:1029px;top:49px;" width="16" height="16" viewBox="0 0 16 16"><circle cx="8" cy="8" r="6.5" fill="#fff" stroke="#ee6a2c" stroke-width="3"/><path d="M3.5 3.5L5.5 5.5M12.5 3.5L10.5 5.5M3.5 12.5L5.5 10.5M12.5 12.5L10.5 10.5" stroke="#fff" stroke-width="2"/><circle cx="8" cy="8" r="3.2" fill="none" stroke="#b8b8b8" stroke-width="0.6"/></svg>
<svg style="position:absolute;left:1105px;top:49px;" width="16" height="16" viewBox="0 0 16 16"><rect x="2" y="4" width="12" height="12" rx="1" fill="#fff" stroke="#222" stroke-width="1.4"/><path d="M5.5 4V2H10.5V4" fill="none" stroke="#222" stroke-width="1.3"/><circle cx="8" cy="10" r="2.4" fill="#2ca94b"/><circle cx="8" cy="10" r="0.8" fill="#fff"/></svg>
<svg style="position:absolute;left:1253px;top:49px;" width="16" height="16" viewBox="0 0 16 16"><path d="M0.5 4.5L8 0.5L15.5 4.5Z" fill="#222"/><rect x="1" y="5" width="14" height="1.5" fill="#222"/><path d="M3 7V13M6 7V13M10 7V13M13 7V13" stroke="#222" stroke-width="1.5"/><rect x="0.5" y="13.5" width="15" height="2" fill="#222"/></svg>
<svg style="position:absolute;left:1803px;top:49px;" width="16" height="16" viewBox="0 0 16 16"><circle cx="6" cy="6" r="4.6" fill="none" stroke="#5a5a5a" stroke-width="1.8"/><path d="M9.3 9.3L14.5 14.5" stroke="#5a5a5a" stroke-width="2.2"/></svg>
<svg style="position:absolute;left:1836px;top:49px;" width="16" height="16" viewBox="0 0 16 16"><rect x="-1" y="1" width="2" height="2" fill="#bfb6a4"/><rect x="-1" y="5" width="2" height="2" fill="#bfb6a4"/><rect x="-1" y="9" width="2" height="2" fill="#bfb6a4"/><rect x="-1" y="13" width="2" height="2" fill="#bfb6a4"/></svg>
<svg style="position:absolute;left:1842px;top:49px;" width="16" height="16" viewBox="0 0 16 16"><rect x="0.5" y="3" width="11.5" height="11.5" rx="1" fill="#e9f4fb" stroke="#8c7a52"/><path d="M4.5 3V14.5M0.5 8H12" stroke="#8c7a52"/><rect x="1" y="3.5" width="10.5" height="1.5" fill="#4f94d6"/><path d="M10 0L11.5 2.5L14 4L11.5 5.5L10 8L8.5 5.5L6 4L8.5 2.5Z" fill="#fff" stroke="#c09a35" stroke-width="0.9"/></svg>
<svg style="position:absolute;left:1864px;top:48px;" width="16" height="16" viewBox="0 0 16 16"><rect x="0" y="0" width="1" height="18" fill="#8d8d8d"/></svg>
<div style="position:absolute;left:954px;top:45px;width:66px;height:23px;box-sizing:border-box;background:#fff;border:1px solid #7a7a7a;border-right-color:#c8c8c8;border-bottom-color:#c8c8c8;"></div>
<div class="t" style="left:960px;top:48px;font-size:12.3px;color:#000;transform:scaleX(0.95);transform-origin:0 0;">100%</div>
<svg style="position:absolute;left:1006px;top:55px;" width="10" height="6" viewBox="0 0 10 6"><path d="M0.5 0.5L4.75 4.75L9 0.5" fill="none" stroke="#333" stroke-width="1.1"/></svg>
<div class="t" style="left:1048px;top:48px;font-size:12.3px;color:#000;transform:scaleX(0.95);transform-origin:0 0;">Get Help</div>
<div class="t" style="left:1125px;top:48px;font-size:12.3px;color:#000;transform:scaleX(0.95);transform-origin:0 0;">CloverDX Marketplace</div>
<div class="t" style="left:1274px;top:48px;font-size:12.3px;color:#000;transform:scaleX(0.95);transform-origin:0 0;">CloverDX Academy</div>
<div style="position:absolute;left:1870px;top:46px;width:24px;height:21px;box-sizing:border-box;background:#cce4f7;border:1px solid #99cdf7;"></div>
<svg style="position:absolute;left:1874px;top:49px;" width="16" height="16" viewBox="0 0 16 16"><circle cx="8" cy="8" r="7.6" fill="#35b056" stroke="#1f8a3a" stroke-width="0.9"/><path d="M2.6 2.6L13.4 13.4M13.4 2.6L2.6 13.4" stroke="#1f7a34" stroke-width="1"/></svg>
<svg style="position:absolute;left:1897px;top:50px;" width="16" height="16" viewBox="0 0 16 16"><path d="M2 5.5L4.5 6.5M1.5 10L5 9.5M4 14L6 11.5M5 1.5L6.5 4.5M9.5 2L9 5M13.5 5.5L11.5 7M14.5 10L12 10M12 14L10.5 12" stroke="#2f7e76" stroke-width="1"/><ellipse cx="8.6" cy="8.6" rx="3.6" ry="4.4" transform="rotate(-35 8.6 8.6)" fill="#a9cf9a" stroke="#2b6fa0" stroke-width="1"/><path d="M7 6.5L10.5 10.5" stroke="#e8f4e0" stroke-width="1"/><circle cx="5.8" cy="5.4" r="1.6" fill="#6aa38a" stroke="#2b6fa0" stroke-width="0.8"/></svg>
<svg style="position:absolute;left:2px;top:3px;" width="17" height="17" viewBox="0 0 17 17"><circle cx="8.5" cy="8.5" r="8" fill="#35b056" stroke="#1f8a3a" stroke-width="0.9"/><path d="M2.8 2.8L14.2 14.2M14.2 2.8L2.8 14.2" stroke="#1f7a34" stroke-width="1"/></svg>
<svg style="position:absolute;left:5px;top:76px;" width="16" height="16" viewBox="0 0 16 16"><path d="M0.5 0.5H6L8.5 3V11.5H0.5Z" fill="#fff" stroke="#9a9070"/><path d="M2 3H6M2 5H7M2 7H7M2 9H5" stroke="#7a8ab8"/><path d="M4.5 8.5H8L9 7.5H13.5V15.5H4.5Z" fill="#f9d77a" stroke="#b7862e"/><path d="M4.5 15.5V10.5H14.5V15.5Z" fill="#fde08a" stroke="#b7862e"/></svg>
<svg style="position:absolute;left:117px;top:81px;" width="10" height="10" viewBox="0 0 10 10"><path d="M0.8 0.8L9.2 9.2M9.2 0.8L0.8 9.2" stroke="#111" stroke-width="1.25"/></svg>
<svg style="position:absolute;left:177px;top:78px;" width="16" height="16" viewBox="0 0 16 16"><rect x="0.5" y="0.5" width="11" height="11" fill="#d8ecfa" stroke="#8a9cc0"/><rect x="3.5" y="2.5" width="10" height="10" fill="#e6f3fc" stroke="#7d90b8"/><path d="M5.5 7.5H11.5" stroke="#1a3f78" stroke-width="1.4"/></svg>
<svg style="position:absolute;left:198px;top:76px;" width="16" height="16" viewBox="0 0 16 16"><path d="M0.5 4L4.5 0.5V2.5H11V5.5H4.5V7.5Z" fill="#fff2c2" stroke="#c98c1a" stroke-width="0.9" stroke-linejoin="round"/><path d="M15.5 12L11.5 8.5V10.5H5V13.5H11.5V15.5Z" fill="#fff2c2" stroke="#c98c1a" stroke-width="0.9" stroke-linejoin="round"/></svg>
<svg style="position:absolute;left:222px;top:77px;" width="16" height="16" viewBox="0 0 16 16"><path d="M0.5 0.5H13.5V2.5L8.5 7.5V13.5L5.5 15V7.5L0.5 2.5Z" fill="#dbeefb" stroke="#8aa0c8" stroke-width="1"/></svg>
<div style="position:absolute;left:243px;top:75px;width:1px;height:18px;background:#8d8d8d;"></div>
<svg style="position:absolute;left:254px;top:78px;" width="16" height="16" viewBox="0 0 16 16"><circle cx="4" cy="4" r="3" fill="#cfcfcf"/><circle cx="10.5" cy="5.5" r="3" fill="#c4c4c4"/><circle cx="5" cy="10" r="3.4" fill="#a9a9a9"/></svg>
<svg style="position:absolute;left:281px;top:77px;" width="6" height="16" viewBox="0 0 6 16"><circle cx="2.5" cy="3" r="2" fill="#fff" stroke="#444" stroke-width="0.9"/><circle cx="2.5" cy="7.4" r="2" fill="#fff" stroke="#444" stroke-width="0.9"/><circle cx="2.5" cy="11.8" r="2" fill="#fff" stroke="#444" stroke-width="0.9"/></svg>
<svg style="position:absolute;left:301px;top:79px;" width="10" height="4" viewBox="0 0 10 4"><rect x="0.5" y="0.5" width="9" height="3" fill="#fff" stroke="#000" stroke-width="1"/></svg>
<svg style="position:absolute;left:324px;top:79px;" width="11" height="11" viewBox="0 0 11 11"><rect x="0.5" y="0.5" width="10" height="10" fill="none" stroke="#000" stroke-width="1.1"/><path d="M0.5 2.5H10.5" stroke="#000"/></svg>
<svg style="position:absolute;left:6px;top:689px;" width="16" height="16" viewBox="0 0 16 16"><rect x="0.5" y="0.5" width="5" height="5" fill="#d4eafb" stroke="#2e6cbc"/><rect x="0.5" y="9.5" width="5" height="5" fill="#d4eafb" stroke="#2e6cbc"/><path d="M7 3H13M9 7.5H10M11 7.5H13M7 12H13" stroke="#2e6cbc" stroke-width="1"/><rect x="7.5" y="6.5" width="1.5" height="1.5" fill="none" stroke="#2e6cbc" stroke-width="0.8"/></svg>
<svg style="position:absolute;left:72px;top:693px;" width="10" height="10" viewBox="0 0 10 10"><path d="M0.8 0.8L9.2 9.2M9.2 0.8L0.8 9.2" stroke="#111" stroke-width="1.25"/></svg>
<svg style="position:absolute;left:162px;top:689px;" width="16" height="16" viewBox="0 0 16 16"><circle cx="4" cy="4" r="3" fill="#cfcfcf"/><circle cx="10.5" cy="5.5" r="3" fill="#c4c4c4"/><circle cx="5" cy="10" r="3.4" fill="#a9a9a9"/></svg>
<div style="position:absolute;left:180px;top:686px;width:23px;height:21px;box-sizing:border-box;background:#cce4f7;border:1px solid #99cdf7;"></div>
<svg style="position:absolute;left:187px;top:689px;" width="16" height="16" viewBox="0 0 16 16"><path d="M1.5 1V13M1.5 4.5H5M1.5 8.5H5M1.5 12.5H5" stroke="#222" stroke-width="1"/><rect x="5.5" y="3.5" width="3" height="2" fill="#fff" stroke="#2f63b0"/><rect x="5.5" y="7.5" width="3" height="2" fill="#fff" stroke="#2f63b0"/><rect x="5.5" y="11.5" width="3" height="2" fill="#fff" stroke="#2f63b0"/><path d="M3 1.5H8" stroke="#222"/></svg>
<svg style="position:absolute;left:206px;top:689px;" width="16" height="16" viewBox="0 0 16 16"><path d="M0.5 5.5L11.5 3.5L15.5 13.5L0.5 15.5Z" fill="#f4f0d8" stroke="#a8a8a8"/><path d="M2 8H12M2 10.5H13M2 13H13M5 6V15M9 5V15" stroke="#b0b0b0" stroke-width="0.8"/><rect x="11" y="0.5" width="4.5" height="4.5" fill="#fff" stroke="#a09020"/><rect x="12" y="1.5" width="2.5" height="2.5" fill="#f0d020"/></svg>
<svg style="position:absolute;left:229px;top:689px;" width="16" height="16" viewBox="0 0 16 16"><path d="M0.5 4L4.5 0.5V2.5H11V5.5H4.5V7.5Z" fill="#fff2c2" stroke="#c98c1a" stroke-width="0.9" stroke-linejoin="round"/><path d="M15.5 12L11.5 8.5V10.5H5V13.5H11.5V15.5Z" fill="#fff2c2" stroke="#c98c1a" stroke-width="0.9" stroke-linejoin="round"/></svg>
<div style="position:absolute;left:249px;top:686px;width:23px;height:21px;box-sizing:border-box;background:#cce4f7;border:1px solid #99cdf7;"></div>
<svg style="position:absolute;left:253px;top:689px;" width="16" height="16" viewBox="0 0 16 16"><rect x="0.5" y="0.5" width="14" height="14" fill="#f4f8ff" stroke="#9aa8c0"/><circle cx="7.5" cy="7.5" r="5" fill="#1a4ab8"/><rect x="6.8" y="6.5" width="1.5" height="4.5" fill="#fff"/><circle cx="7.5" cy="4.7" r="0.9" fill="#fff"/></svg>
<svg style="position:absolute;left:281px;top:690px;" width="6" height="16" viewBox="0 0 6 16"><circle cx="2.5" cy="3" r="2" fill="#fff" stroke="#444" stroke-width="0.9"/><circle cx="2.5" cy="7.4" r="2" fill="#fff" stroke="#444" stroke-width="0.9"/><circle cx="2.5" cy="11.8" r="2" fill="#fff" stroke="#444" stroke-width="0.9"/></svg>
<svg style="position:absolute;left:301px;top:692px;" width="10" height="4" viewBox="0 0 10 4"><rect x="0.5" y="0.5" width="9" height="3" fill="#fff" stroke="#000" stroke-width="1"/></svg>
<svg style="position:absolute;left:324px;top:692px;" width="11" height="11" viewBox="0 0 11 11"><rect x="0.5" y="0.5" width="10" height="10" fill="none" stroke="#000" stroke-width="1.1"/><path d="M0.5 2.5H10.5" stroke="#000"/></svg>
<svg style="position:absolute;left:357px;top:77px;" width="12" height="16" viewBox="0 0 12 16"><path d="M0.5 0.5H8L11.5 4V15.5H0.5Z" fill="#eef4fb" stroke="#8a90a8"/><path d="M8 0.5V4H11.5" fill="#e8c87a" stroke="#b8a070"/><path d="M2.5 3.5H6M2.5 6H9.5M2.5 8.5H9.5M2.5 11H9.5M2.5 13.5H8" stroke="#4a68a8" stroke-width="1"/></svg>
<svg style="position:absolute;left:451px;top:76px;" width="16" height="16" viewBox="0 0 16 16"><circle cx="9.00" cy="3.62" r="3.12" fill="#1d8d39"/><circle cx="11.88" cy="6.50" r="3.12" fill="#1d8d39"/><circle cx="9.00" cy="9.38" r="3.12" fill="#1d8d39"/><circle cx="6.12" cy="6.50" r="3.12" fill="#1d8d39"/><circle cx="9.00" cy="3.62" r="2.22" fill="#37b158"/><circle cx="11.88" cy="6.50" r="2.22" fill="#37b158"/><circle cx="9.00" cy="9.38" r="2.22" fill="#37b158"/><circle cx="6.12" cy="6.50" r="2.22" fill="#37b158"/><circle cx="9.00" cy="6.50" r="0.84" fill="#fff"/><rect x="0.5" y="9.5" width="5" height="4" rx="0.8" fill="#8ee07a" stroke="#333" stroke-width="0.9"/><rect x="8.5" y="11.5" width="6" height="4" rx="0.8" fill="#fff3a0" stroke="#333" stroke-width="0.9"/></svg>
<svg style="position:absolute;left:646px;top:81px;" width="10" height="10" viewBox="0 0 10 10"><path d="M0.8 0.8L9.2 9.2M9.2 0.8L0.8 9.2" stroke="#111" stroke-width="1.25"/></svg>
<svg style="position:absolute;left:1876px;top:79px;" width="10" height="4" viewBox="0 0 10 4"><rect x="0.5" y="0.5" width="9" height="3" fill="#fff" stroke="#000" stroke-width="1"/></svg>
<svg style="position:absolute;left:1899px;top:79px;" width="11" height="11" viewBox="0 0 11 11"><rect x="0.5" y="0.5" width="10" height="10" fill="none" stroke="#000" stroke-width="1.1"/><path d="M0.5 2.5H10.5" stroke="#000"/></svg>
<svg style="position:absolute;left:1633px;top:101px;" width="16" height="16" viewBox="0 0 16 16"><circle cx="8" cy="8" r="7.3" fill="#eaf2fa" stroke="#9ab8d8" stroke-width="0.8"/><circle cx="5.5" cy="3.5" r="1.4" fill="#ffd000" stroke="#e09000" stroke-width="0.6"/><circle cx="9.3" cy="3.5" r="1.3" fill="#fff" stroke="#5a9a10" stroke-width="0.9"/><circle cx="3.5" cy="7.3" r="1.4" fill="#ffa020" stroke="#e07000" stroke-width="0.6"/><circle cx="11.6" cy="7.3" r="1.3" fill="#fff" stroke="#129a12" stroke-width="1"/><path d="M5.5 9.8L6.7 11L5.5 12.2L4.3 11Z" fill="#fff" stroke="#d02020" stroke-width="0.8"/><path d="M9.3 9.8L10.5 11L9.3 12.2L8.1 11Z" fill="#fff" stroke="#1a50e0" stroke-width="0.8"/></svg>
<svg style="position:absolute;left:1911px;top:104px;" width="7" height="12" viewBox="0 0 7 12"><path d="M0.5 0.5L6 6L0.5 11.5Z" fill="none" stroke="#555" stroke-width="1"/></svg>
<svg style="position:absolute;left:1631px;top:140px;" width="16" height="16" viewBox="0 0 16 16"><circle cx="6" cy="6" r="4.8" fill="#e6ecf2" stroke="#a09a78" stroke-width="1"/><path d="M9.5 9.5L13.5 13.5" stroke="#6a4a3a" stroke-width="2"/></svg>
<svg style="position:absolute;left:1906px;top:177px;" width="9" height="6" viewBox="0 0 9 6"><path d="M0.8 5L4.5 1.2L8.2 5" fill="none" stroke="#555" stroke-width="1.6"/></svg>
<svg style="position:absolute;left:1906px;top:761px;" width="9" height="6" viewBox="0 0 9 6"><path d="M0.8 1L4.5 4.8L8.2 1" fill="none" stroke="#555" stroke-width="1.6"/></svg>
<svg style="position:absolute;left:6px;top:667px;" width="6" height="9" viewBox="0 0 6 9"><path d="M5 0.8L1.2 4.5L5 8.2" fill="none" stroke="#555" stroke-width="1.6"/></svg>
<svg style="position:absolute;left:332px;top:667px;" width="6" height="9" viewBox="0 0 6 9"><path d="M1 0.8L4.8 4.5L1 8.2" fill="none" stroke="#555" stroke-width="1.6"/></svg>
<svg style="position:absolute;left:1292px;top:856px;" width="8" height="6" viewBox="0 0 8 6"><path d="M0.8 5L4 1.5L7.2 5" fill="none" stroke="#555" stroke-width="2"/></svg>
<svg style="position:absolute;left:1292px;top:1105px;" width="8" height="6" viewBox="0 0 8 6"><path d="M0.8 1L4 4.5L7.2 1" fill="none" stroke="#555" stroke-width="2"/></svg>
<svg style="position:absolute;left:355px;top:1120px;" width="6" height="9" viewBox="0 0 6 9"><path d="M5 0.8L1.2 4.5L5 8.2" fill="none" stroke="#555" stroke-width="1.6"/></svg>
<svg style="position:absolute;left:1275px;top:1120px;" width="6" height="9" viewBox="0 0 6 9"><path d="M1 0.8L4.8 4.5L1 8.2" fill="none" stroke="#555" stroke-width="1.6"/></svg>
<svg style="position:absolute;left:20px;top:98px;" width="16" height="16" viewBox="0 0 16 16"><path d="M0.5 5.5H3L4 4.5H7V14.5H0.5Z" fill="#d8a0c0" stroke="#8a70a0" stroke-width="0.8"/><path d="M1 15.5L3 9.5H15.5L13 15.5Z" fill="#4a72c8" stroke="#2a4c98" stroke-width="0.8"/><rect x="1" y="9" width="3" height="6" fill="#f2d27a"/><circle cx="9.50" cy="3.44" r="3.64" fill="#1d7a34"/><circle cx="12.86" cy="6.80" r="3.64" fill="#1d7a34"/><circle cx="9.50" cy="10.16" r="3.64" fill="#1d7a34"/><circle cx="6.14" cy="6.80" r="3.64" fill="#1d7a34"/><circle cx="9.50" cy="3.44" r="2.74" fill="#37b158"/><circle cx="12.86" cy="6.80" r="2.74" fill="#37b158"/><circle cx="9.50" cy="10.16" r="2.74" fill="#37b158"/><circle cx="6.14" cy="6.80" r="2.74" fill="#37b158"/><circle cx="9.50" cy="6.80" r="0.98" fill="#fff"/></svg>
<svg style="position:absolute;left:7px;top:104px;" width="10" height="6" viewBox="0 0 10 6"><path d="M0.8 0.8L4.5 4.5L8.2 0.8" fill="none" stroke="#3c3c3c" stroke-width="1.4"/></svg>
<svg style="position:absolute;left:37px;top:116px;" width="16" height="16" viewBox="0 0 16 16"><path d="M0.5 3.5V13.5H13.5V5.5H7L5.5 3.5Z" fill="#f6dca0" stroke="#b9853a"/><path d="M0.5 13.5L3 7.5H15.5L13.5 13.5Z" fill="#fbe9bd" stroke="#b9853a"/></svg>
<svg style="position:absolute;left:25px;top:119px;" width="6" height="10" viewBox="0 0 6 10"><path d="M0.8 0.8L4.5 4.5L0.8 8.2" fill="none" stroke="#a3a3a3" stroke-width="1.4"/></svg>
<svg style="position:absolute;left:37px;top:134px;" width="16" height="16" viewBox="0 0 16 16"><path d="M0.5 3.5V13.5H13.5V5.5H7L5.5 3.5Z" fill="#f6dca0" stroke="#b9853a"/><path d="M0.5 13.5L3 7.5H15.5L13.5 13.5Z" fill="#fbe9bd" stroke="#b9853a"/></svg>
<svg style="position:absolute;left:37px;top:152px;" width="16" height="16" viewBox="0 0 16 16"><path d="M0.5 3.5V13.5H13.5V5.5H7L5.5 3.5Z" fill="#f6dca0" stroke="#b9853a"/><path d="M0.5 13.5L3 7.5H15.5L13.5 13.5Z" fill="#fbe9bd" stroke="#b9853a"/></svg>
<svg style="position:absolute;left:23px;top:158px;" width="10" height="6" viewBox="0 0 10 6"><path d="M0.8 0.8L4.5 4.5L8.2 0.8" fill="none" stroke="#3c3c3c" stroke-width="1.4"/></svg>
<svg style="position:absolute;left:52px;top:170px;" width="16" height="16" viewBox="0 0 16 16"><path d="M0.5 0.5H9L11.5 3V14.5H0.5Z" fill="#fff" stroke="#6a6a6a"/><path d="M2 1.8H8" stroke="#8a8a8a" stroke-dasharray="1 1"/><rect x="1.5" y="8" width="8" height="5.5" fill="#41b33a"/><rect x="1.5" y="8" width="8" height="2.5" fill="#b3dd7a"/><path d="M6 12.5L12.5 2" stroke="#e8a020" stroke-width="1.8"/><path d="M12 2.5L13 1" stroke="#a02020" stroke-width="1.5"/></svg>
<svg style="position:absolute;left:37px;top:188px;" width="16" height="16" viewBox="0 0 16 16"><path d="M0.5 3.5V13.5H13.5V5.5H7L5.5 3.5Z" fill="#f6dca0" stroke="#b9853a"/><path d="M0.5 13.5L3 7.5H15.5L13.5 13.5Z" fill="#fbe9bd" stroke="#b9853a"/></svg>
<svg style="position:absolute;left:23px;top:194px;" width="10" height="6" viewBox="0 0 10 6"><path d="M0.8 0.8L4.5 4.5L8.2 0.8" fill="none" stroke="#3c3c3c" stroke-width="1.4"/></svg>
<svg style="position:absolute;left:52px;top:206px;" width="16" height="16" viewBox="0 0 16 16"><path d="M4.5 0.5H11L14.5 4V15.5H4.5Z" fill="#fff" stroke="#8a8a8a"/><path d="M10 7.5H13M10 9.5H13M10 11.5H13" stroke="#2a8c4a"/><rect x="0" y="5" width="9" height="8" fill="#1f7a43"/><path d="M2.5 6.8L6.5 11.2M6.5 6.8L2.5 11.2" stroke="#fff" stroke-width="1.3"/></svg>
<svg style="position:absolute;left:37px;top:224px;" width="16" height="16" viewBox="0 0 16 16"><path d="M0.5 3.5V13.5H13.5V5.5H7L5.5 3.5Z" fill="#f6dca0" stroke="#b9853a"/><path d="M0.5 13.5L3 7.5H15.5L13.5 13.5Z" fill="#fbe9bd" stroke="#b9853a"/></svg>
<svg style="position:absolute;left:37px;top:242px;" width="16" height="16" viewBox="0 0 16 16"><path d="M0.5 3.5V13.5H13.5V5.5H7L5.5 3.5Z" fill="#f6dca0" stroke="#b9853a"/><path d="M0.5 13.5L3 7.5H15.5L13.5 13.5Z" fill="#fbe9bd" stroke="#b9853a"/></svg>
<svg style="position:absolute;left:37px;top:260px;" width="16" height="16" viewBox="0 0 16 16"><path d="M0.5 3.5V13.5H13.5V5.5H7L5.5 3.5Z" fill="#f6dca0" stroke="#b9853a"/><path d="M0.5 13.5L3 7.5H15.5L13.5 13.5Z" fill="#fbe9bd" stroke="#b9853a"/></svg>
<svg style="position:absolute;left:23px;top:266px;" width="10" height="6" viewBox="0 0 10 6"><path d="M0.8 0.8L4.5 4.5L8.2 0.8" fill="none" stroke="#3c3c3c" stroke-width="1.4"/></svg>
<svg style="position:absolute;left:52px;top:278px;" width="16" height="16" viewBox="0 0 16 16"><path d="M0.5 3.5V13.5H13.5V5.5H7L5.5 3.5Z" fill="#f6dca0" stroke="#b9853a"/><path d="M0.5 13.5L3 7.5H15.5L13.5 13.5Z" fill="#fbe9bd" stroke="#b9853a"/></svg>
<svg style="position:absolute;left:52px;top:296px;" width="16" height="16" viewBox="0 0 16 16"><circle cx="9.00" cy="3.62" r="3.12" fill="#1d8d39"/><circle cx="11.88" cy="6.50" r="3.12" fill="#1d8d39"/><circle cx="9.00" cy="9.38" r="3.12" fill="#1d8d39"/><circle cx="6.12" cy="6.50" r="3.12" fill="#1d8d39"/><circle cx="9.00" cy="3.62" r="2.22" fill="#37b158"/><circle cx="11.88" cy="6.50" r="2.22" fill="#37b158"/><circle cx="9.00" cy="9.38" r="2.22" fill="#37b158"/><circle cx="6.12" cy="6.50" r="2.22" fill="#37b158"/><circle cx="9.00" cy="6.50" r="0.84" fill="#fff"/><rect x="0.5" y="9.5" width="5" height="4" rx="0.8" fill="#8ee07a" stroke="#333" stroke-width="0.9"/><rect x="8.5" y="11.5" width="6" height="4" rx="0.8" fill="#fff3a0" stroke="#333" stroke-width="0.9"/></svg>
<svg style="position:absolute;left:37px;top:314px;" width="16" height="16" viewBox="0 0 16 16"><path d="M0.5 3.5V13.5H13.5V5.5H7L5.5 3.5Z" fill="#f6dca0" stroke="#b9853a"/><path d="M0.5 13.5L3 7.5H15.5L13.5 13.5Z" fill="#fbe9bd" stroke="#b9853a"/></svg>
<svg style="position:absolute;left:37px;top:332px;" width="16" height="16" viewBox="0 0 16 16"><path d="M0.5 3.5V13.5H13.5V5.5H7L5.5 3.5Z" fill="#f6dca0" stroke="#b9853a"/><path d="M0.5 13.5L3 7.5H15.5L13.5 13.5Z" fill="#fbe9bd" stroke="#b9853a"/></svg>
<svg style="position:absolute;left:37px;top:350px;" width="16" height="16" viewBox="0 0 16 16"><path d="M0.5 3.5V13.5H13.5V5.5H7L5.5 3.5Z" fill="#f6dca0" stroke="#b9853a"/><path d="M0.5 13.5L3 7.5H15.5L13.5 13.5Z" fill="#fbe9bd" stroke="#b9853a"/></svg>
<svg style="position:absolute;left:37px;top:368px;" width="16" height="16" viewBox="0 0 16 16"><path d="M0.5 3.5V13.5H13.5V5.5H7L5.5 3.5Z" fill="#f6dca0" stroke="#b9853a"/><path d="M0.5 13.5L3 7.5H15.5L13.5 13.5Z" fill="#fbe9bd" stroke="#b9853a"/></svg>
<svg style="position:absolute;left:37px;top:386px;" width="16" height="16" viewBox="0 0 16 16"><path d="M0.5 3.5V13.5H13.5V5.5H7L5.5 3.5Z" fill="#f6dca0" stroke="#b9853a"/><path d="M0.5 13.5L3 7.5H15.5L13.5 13.5Z" fill="#fbe9bd" stroke="#b9853a"/></svg>
<svg style="position:absolute;left:37px;top:404px;" width="16" height="16" viewBox="0 0 16 16"><path d="M0.5 3.5V13.5H13.5V5.5H7L5.5 3.5Z" fill="#f6dca0" stroke="#b9853a"/><path d="M0.5 13.5L3 7.5H15.5L13.5 13.5Z" fill="#fbe9bd" stroke="#b9853a"/></svg>
<svg style="position:absolute;left:38px;top:422px;" width="16" height="16" viewBox="0 0 16 16"><path d="M0.5 0.5H7.5L10.5 3.5V15.5H0.5Z" fill="#fff" stroke="#8a9ab8"/><text x="2" y="12.5" font-size="10" font-weight="bold" fill="#2a4a8a" font-family="Liberation Sans">X</text></svg>
<svg style="position:absolute;left:38px;top:440px;" width="16" height="16" viewBox="0 0 16 16"><path d="M0.5 0.5H7.5L10.5 3.5V15.5H0.5Z" fill="#fff" stroke="#8a9ab8"/><text x="2" y="12.5" font-size="10" font-weight="bold" fill="#2a4a8a" font-family="Liberation Sans">X</text></svg>
<svg style="position:absolute;left:38px;top:458px;" width="16" height="16" viewBox="0 0 16 16"><rect x="0.5" y="0.5" width="10.5" height="14.5" fill="#fff" stroke="#8a9ab8"/><path d="M2 3H9.5M2 5H9.5M2 7H9.5M2 9H9.5" stroke="#7a8ab0" stroke-width="0.8"/><text x="1.5" y="14" font-size="4.5" fill="#3a5aa8" font-family="Liberation Sans">x=y</text></svg>
<svg style="position:absolute;left:1656px;top:172px;" width="16" height="16" viewBox="0 0 16 16"><rect x="0.5" y="0.5" width="11" height="11" fill="#ecdcec" stroke="#8a6a8a"/><rect x="2.5" y="3" width="7" height="5" fill="#f8f0f8" stroke="#a080a0" stroke-width="0.8"/><path d="M7.5 10.5H11V8.2L15.5 12L11 15.8V13.5H7.5Z" fill="#86dc78" stroke="#3d9d3d" stroke-width="0.8" stroke-linejoin="round"/></svg>
<svg style="position:absolute;left:1656px;top:190px;" width="16" height="16" viewBox="0 0 16 16"><ellipse cx="6.5" cy="7" rx="6" ry="5" fill="#3d9ad6"/><text x="2.5" y="9.5" font-size="7" font-style="italic" fill="#fff" font-family="Liberation Sans">sf</text><path d="M0.5 12.5H8" stroke="#888"/><path d="M7.5 10.5H11V8.2L15.5 12L11 15.8V13.5H7.5Z" fill="#86dc78" stroke="#3d9d3d" stroke-width="0.8" stroke-linejoin="round"/></svg>
<svg style="position:absolute;left:1656px;top:208px;" width="16" height="16" viewBox="0 0 16 16"><ellipse cx="6.5" cy="7" rx="6" ry="5" fill="#3d9ad6"/><text x="2.5" y="9.5" font-size="7" font-style="italic" fill="#fff" font-family="Liberation Sans">sf</text><path d="M7.5 10.5H11V8.2L15.5 12L11 15.8V13.5H7.5Z" fill="#86dc78" stroke="#3d9d3d" stroke-width="0.8" stroke-linejoin="round"/></svg>
<svg style="position:absolute;left:1656px;top:226px;" width="16" height="16" viewBox="0 0 16 16"><path d="M0.5 1.5L9 0.5L10 12L1.5 13Z" fill="#fff" stroke="#777"/><rect x="3.5" y="3.5" width="4" height="4" fill="#33b85c"/><path d="M7.5 10.5H11V8.2L15.5 12L11 15.8V13.5H7.5Z" fill="#86dc78" stroke="#3d9d3d" stroke-width="0.8" stroke-linejoin="round"/></svg>
<svg style="position:absolute;left:1656px;top:244px;" width="16" height="16" viewBox="0 0 16 16"><rect x="0.5" y="0.5" width="11" height="10" fill="#f0dcc0" stroke="#8a6a4a"/><path d="M1 3.5H11M1 6.5H11M4 1V10M8 1V10" stroke="#8a6a4a" stroke-width="0.7"/><path d="M7.5 10.5H11V8.2L15.5 12L11 15.8V13.5H7.5Z" fill="#86dc78" stroke="#3d9d3d" stroke-width="0.8" stroke-linejoin="round"/></svg>
<svg style="position:absolute;left:1656px;top:262px;" width="16" height="16" viewBox="0 0 16 16"><path d="M0.5 1.5L9 0.5L10 13L1.5 14Z" fill="#fff" stroke="#777"/><path d="M2.5 13V9L4.5 7.5V13Z" fill="#5ad0f0"/><path d="M5.5 13V7L7.5 5V13Z" fill="#e86a7a"/><path d="M7.5 10.5H11V8.2L15.5 12L11 15.8V13.5H7.5Z" fill="#86dc78" stroke="#3d9d3d" stroke-width="0.8" stroke-linejoin="round"/></svg>
<svg style="position:absolute;left:1656px;top:280px;" width="16" height="16" viewBox="0 0 16 16"><path d="M0.5 1.5L9 0.5L10 13L1.5 14Z" fill="#fff" stroke="#888"/><path d="M2.5 4H7M2.5 6H8" stroke="#e8a0a8" stroke-width="0.9"/><path d="M7.5 10.5H11V8.2L15.5 12L11 15.8V13.5H7.5Z" fill="#86dc78" stroke="#3d9d3d" stroke-width="0.8" stroke-linejoin="round"/></svg>
<svg style="position:absolute;left:1656px;top:298px;" width="16" height="16" viewBox="0 0 16 16"><path d="M0.5 1.5L9 0.5L10 13L1.5 14Z" fill="#fff" stroke="#888"/><path d="M2.5 4H7M2.5 6H8M2.5 8H6" stroke="#999" stroke-width="0.9"/><path d="M7.5 10.5H11V8.2L15.5 12L11 15.8V13.5H7.5Z" fill="#86dc78" stroke="#3d9d3d" stroke-width="0.8" stroke-linejoin="round"/></svg>
<svg style="position:absolute;left:1656px;top:316px;" width="16" height="16" viewBox="0 0 16 16"><path d="M0.5 1.5L9 0.5L10 13L1.5 14Z" fill="#fff" stroke="#888"/><path d="M2.5 4H7M2.5 6H8M2.5 8H6" stroke="#999" stroke-width="0.9"/><path d="M7.5 10.5H11V8.2L15.5 12L11 15.8V13.5H7.5Z" fill="#86dc78" stroke="#3d9d3d" stroke-width="0.8" stroke-linejoin="round"/></svg>
<svg style="position:absolute;left:1640px;top:334px;" width="16" height="16" viewBox="0 0 16 16"><path d="M0.5 3.5H5L6 2H9.5V15.5H0.5Z" fill="#fff" stroke="#333" stroke-width="0.9"/><path d="M8 15L13 1.5Q15.5 1 14 5L10 14Z" fill="#5ab4e8" stroke="#333" stroke-width="0.8"/></svg>
<svg style="position:absolute;left:1629px;top:337px;" width="6" height="10" viewBox="0 0 6 10"><path d="M0.8 0.8L4.5 4.5L0.8 8.2" fill="none" stroke="#a3a3a3" stroke-width="1.4"/></svg>
<svg style="position:absolute;left:1640px;top:352px;" width="16" height="16" viewBox="0 0 16 16"><path d="M0.5 3.5H5L6 2H15.5V15.5H0.5Z" fill="#fff" stroke="#333" stroke-width="0.9"/><path d="M5 11L11 6" stroke="#333" stroke-width="0.8"/><circle cx="5" cy="11" r="3" fill="#e86a7a" stroke="#933" stroke-width="0.5"/><circle cx="11.5" cy="5.5" r="2.6" fill="#5ac85a" stroke="#393" stroke-width="0.5"/></svg>
<svg style="position:absolute;left:1628px;top:358px;" width="10" height="6" viewBox="0 0 10 6"><path d="M0.8 0.8L4.5 4.5L8.2 0.8" fill="none" stroke="#3c3c3c" stroke-width="1.4"/></svg>
<svg style="position:absolute;left:1656px;top:370px;" width="16" height="16" viewBox="0 0 16 16"><rect x="0.5" y="0.5" width="3" height="15" fill="#6ac86a" stroke="#3a8a3a" stroke-width="0.8"/><path d="M3.5 8H9" stroke="#777" stroke-width="0.8"/><path d="M3.5 3L6 8L3.5 13" stroke="#888" fill="none" stroke-width="0.7"/><rect x="9.5" y="6" width="6" height="4" fill="#7ad07a" stroke="#3a8a3a" stroke-width="0.7"/></svg>
<svg style="position:absolute;left:1656px;top:388px;" width="16" height="16" viewBox="0 0 16 16"><path d="M1 1.5H10V12" stroke="#d05a6a" stroke-width="1.8" fill="none"/><path d="M2 4H7V12" stroke="#e8d040" stroke-width="1.6" fill="none"/><path d="M1 7H4V12" stroke="#5ac05a" stroke-width="1.4" fill="none"/><path d="M0.5 14H15L13 12.5M15 14L13 15.5" stroke="#3a8ad0" stroke-width="0.9" fill="none"/><circle cx="3" cy="14" r="1" fill="#5ac05a"/><circle cx="6.5" cy="14" r="1" fill="#e8d040"/><circle cx="10" cy="14" r="1" fill="#d05a6a"/></svg>
<svg style="position:absolute;left:1656px;top:406px;" width="16" height="16" viewBox="0 0 16 16"><circle cx="5" cy="3.5" r="3" fill="#5ac85a" stroke="#2a6a2a" stroke-width="0.7"/><path d="M5 6.5V10" stroke="#333"/><circle cx="5" cy="10" r="1.5" fill="#333"/><path d="M6.5 10H11" stroke="#3a8ad0"/><rect x="11" y="7.5" width="4.5" height="5" fill="#e86a7a" stroke="#933" stroke-width="0.6"/><path d="M0.5 14.5L2 11.5H8L9.5 14.5Z" fill="#fff" stroke="#555" stroke-width="0.8"/></svg>
<svg style="position:absolute;left:1656px;top:424px;" width="16" height="16" viewBox="0 0 16 16"><circle cx="6.5" cy="9" r="6" fill="#5ac85a" stroke="#2a7a2a" stroke-width="0.7"/><circle cx="9.5" cy="7" r="5.8" fill="#e86a7a" stroke="#933" stroke-width="0.7"/><circle cx="8" cy="8" r="3.6" fill="#fff"/></svg>
<svg style="position:absolute;left:1656px;top:442px;" width="16" height="16" viewBox="0 0 16 16"><rect x="0.2" y="0.2" width="3.6" height="3.6" rx="0.8" fill="#e86a7a"/><rect x="0.2" y="4.2" width="3.6" height="3.6" rx="0.8" fill="#5ac85a"/><rect x="0.2" y="8.2" width="3.6" height="3.6" rx="0.8" fill="#e86a7a"/><rect x="0.2" y="12.2" width="3.6" height="3.6" rx="0.8" fill="#f0d040"/><rect x="12.2" y="0.2" width="3.6" height="3.6" rx="0.8" fill="#5aaae8"/><rect x="12.2" y="4.2" width="3.6" height="3.6" rx="0.8" fill="#5ac85a"/><rect x="12.2" y="8.2" width="3.6" height="3.6" rx="0.8" fill="#5aaae8"/><rect x="12.2" y="12.2" width="3.6" height="3.6" rx="0.8" fill="#f0d040"/><circle cx="8" cy="7" r="2.6" fill="#fff" stroke="#888" stroke-width="0.8"/><path d="M4 3L8 7L12 3M8 7V13" stroke="#999" stroke-width="0.7" fill="none"/></svg>
<svg style="position:absolute;left:1656px;top:460px;" width="16" height="16" viewBox="0 0 16 16"><rect x="0.5" y="0.5" width="3" height="15" fill="#7ad07a" stroke="#3a8a3a" stroke-width="0.7"/><rect x="0.5" y="0.5" width="3" height="4" fill="#e86a7a"/><path d="M3.5 10H15" stroke="#999" stroke-width="0.8"/><circle cx="8" cy="10" r="1.2" fill="none" stroke="#888" stroke-width="0.7"/><circle cx="11" cy="10" r="1.2" fill="none" stroke="#888" stroke-width="0.7"/><rect x="13" y="8" width="2.5" height="7.5" fill="#7ad07a"/></svg>
<svg style="position:absolute;left:1656px;top:478px;" width="16" height="16" viewBox="0 0 16 16"><path d="M0.5 2H12M0.5 5H13M0.5 8H12" stroke="#c05a6a" stroke-width="1.6"/><path d="M0.5 8H12" stroke="#e8d040" stroke-width="1.6"/><path d="M0.5 5H13" stroke="#5ac05a" stroke-width="1.6"/><path d="M0.5 12.5H15M13 10.5L15.5 12.5L13 14.5" stroke="#3a8ad0" stroke-width="1.1" fill="none"/><path d="M0.5 12.5H9" stroke="#e8a0a0" stroke-width="1.6"/></svg>
<svg style="position:absolute;left:1656px;top:496px;" width="16" height="16" viewBox="0 0 16 16"><path d="M4.5 0.5H11.5V7.5H15L8 15.5L1 7.5H4.5Z" fill="#f6ea8a" stroke="#c8b040" stroke-width="0.9" stroke-linejoin="round"/><path d="M6.5 3H9.5L7 9H10" stroke="#c0a030" stroke-width="0.7" fill="none"/></svg>
<svg style="position:absolute;left:1656px;top:514px;" width="16" height="16" viewBox="0 0 16 16"><path d="M2.5 0.5H6V7.5H8L4.2 15.5L0.5 7.5H2.5Z" fill="#f6ea8a" stroke="#c8b040" stroke-width="0.8" stroke-linejoin="round"/><path d="M10 0.5H13.5V7.5H15.5L11.8 15.5L8 7.5H10Z" fill="#f8f0c0" stroke="#d0c070" stroke-width="0.8" stroke-linejoin="round"/></svg>
<svg style="position:absolute;left:1656px;top:532px;" width="16" height="16" viewBox="0 0 16 16"><path d="M0.5 7.5H15" stroke="#666" stroke-width="1"/><path d="M3.5 6L12.5 6L9.5 11H6.5Z" fill="#c8c8c8" stroke="#777" stroke-width="0.7"/><circle cx="6" cy="3" r="1.4" fill="#5ac85a"/><circle cx="9.5" cy="2" r="1.4" fill="#e86a7a"/><circle cx="11.5" cy="4.5" r="1.3" fill="#5aaae8"/><circle cx="7" cy="13" r="1.5" fill="#5ac85a"/><circle cx="10" cy="14" r="1.5" fill="#5ac85a"/></svg>
<svg style="position:absolute;left:1656px;top:550px;" width="16" height="16" viewBox="0 0 16 16"><rect x="0.5" y="5" width="4" height="6" fill="#f0a0b0"/><path d="M5 8L14 2M5 8L15 8M5 8L14 14" stroke="#3a8ad0" stroke-width="1"/><rect x="12" y="0.5" width="3.5" height="3.5" fill="#f0a0b0" stroke="#c06070" stroke-width="0.5"/><rect x="12" y="12" width="3.5" height="3.5" fill="#f0a0b0" stroke="#c06070" stroke-width="0.5"/></svg>
<svg style="position:absolute;left:1656px;top:568px;" width="16" height="16" viewBox="0 0 16 16"><circle cx="4.5" cy="4.5" r="4" fill="#5ac85a" stroke="#2a6a2a" stroke-width="0.7"/><circle cx="3.5" cy="12" r="1.8" fill="#222"/><path d="M4.5 8.5V10M5.5 12H10" stroke="#3a8ad0" stroke-width="1"/><rect x="10" y="9" width="5.5" height="6" fill="#e86a7a" stroke="#933" stroke-width="0.6"/></svg>
<svg style="position:absolute;left:1656px;top:586px;" width="16" height="16" viewBox="0 0 16 16"><circle cx="8.5" cy="2.5" r="2" fill="none" stroke="#888" stroke-width="0.8"/><circle cx="8.5" cy="8" r="3" fill="#555"/><path d="M0.5 4L6 7M0.5 12L6 9M11 8H15.5M13.5 6L15.5 8L13.5 10" stroke="#3a9ad8" stroke-width="1.1" fill="none"/><path d="M8.5 11V15" stroke="#999" stroke-width="0.8"/></svg>
<svg style="position:absolute;left:1656px;top:604px;" width="16" height="16" viewBox="0 0 16 16"><rect x="0.5" y="0.5" width="8" height="6" fill="#e8d8c8" stroke="#8a6a4a" stroke-width="0.7"/><rect x="8" y="7" width="7" height="8.5" fill="#a88a6a" stroke="#6a4a2a" stroke-width="0.7"/><path d="M9 1Q14 1 13.5 6" stroke="#3a9ad8" stroke-width="1.3" fill="none"/><path d="M3 3.5H6M10 10H13.5M10 13H13.5" stroke="#5ac85a" stroke-width="0.8"/></svg>
<svg style="position:absolute;left:1656px;top:622px;" width="16" height="16" viewBox="0 0 16 16"><path d="M0.5 1H9" stroke="#c05a6a" stroke-width="1.5"/><path d="M2 1V13" stroke="#999" stroke-width="0.7"/><path d="M2 5H15M2 9H15M2 13H15" stroke="#7ac8e8" stroke-width="1"/><circle cx="9" cy="5" r="1.3" fill="#e86a7a"/><circle cx="9" cy="9" r="1.3" fill="#f0d040"/><circle cx="9" cy="13" r="1.3" fill="#5ac85a"/></svg>
<svg style="position:absolute;left:1656px;top:640px;" width="16" height="16" viewBox="0 0 16 16"><rect x="0.5" y="5" width="4" height="6" fill="#f0a0b0"/><path d="M5 8L14 2M5 8L15 8M5 8L14 14" stroke="#3a8ad0" stroke-width="1"/><rect x="12" y="0.5" width="3.5" height="3.5" fill="#f0a0b0" stroke="#c06070" stroke-width="0.5"/><rect x="12" y="12" width="3.5" height="3.5" fill="#f0a0b0" stroke="#c06070" stroke-width="0.5"/></svg>
<svg style="position:absolute;left:1656px;top:658px;" width="16" height="16" viewBox="0 0 16 16"><rect x="0.5" y="6" width="7" height="9.5" fill="#a88a6a" stroke="#6a4a2a" stroke-width="0.7"/><rect x="7.5" y="0.5" width="8" height="6" fill="#e8d8c8" stroke="#8a6a4a" stroke-width="0.7"/><path d="M2 6Q2 1.5 7 2" stroke="#3a9ad8" stroke-width="1.3" fill="none"/><path d="M3 9V14" stroke="#5ac85a" stroke-width="0.8"/></svg>
<svg style="position:absolute;left:1656px;top:676px;" width="16" height="16" viewBox="0 0 16 16"><rect x="0.5" y="0.5" width="3.2" height="3.2" fill="#e86a7a" stroke="#888" stroke-width="0.4"/><rect x="4" y="0.5" width="3.2" height="3.2" fill="#e86a7a" stroke="#888" stroke-width="0.4"/><rect x="0.5" y="4.5" width="3.2" height="3.2" fill="#5ac85a" stroke="#888" stroke-width="0.4"/><rect x="4" y="4.5" width="3.2" height="3.2" fill="#5ac85a" stroke="#888" stroke-width="0.4"/><rect x="0.5" y="8.5" width="3.2" height="3.2" fill="#e86a7a" stroke="#888" stroke-width="0.4"/><rect x="4" y="8.5" width="3.2" height="3.2" fill="#5ac85a" stroke="#888" stroke-width="0.4"/><rect x="0.5" y="12.3" width="3.2" height="3.2" fill="#5ac85a" stroke="#888" stroke-width="0.4"/><rect x="4" y="12.3" width="3.2" height="3.2" fill="#e86a7a" stroke="#888" stroke-width="0.4"/><rect x="12" y="5" width="3.2" height="3.2" fill="#e86a7a" stroke="#888" stroke-width="0.4"/><rect x="12" y="9" width="3.2" height="3.2" fill="#5ac85a" stroke="#888" stroke-width="0.4"/><path d="M7.5 9H12" stroke="#999" stroke-width="0.8"/></svg>
<svg style="position:absolute;left:1656px;top:694px;" width="16" height="16" viewBox="0 0 16 16"><path d="M0.5 8H5M5 8L13 3M5 8H14M5 8L13 13" stroke="#3a9ad8" stroke-width="1.3" fill="none"/><circle cx="7" cy="8" r="3" fill="#5aaae8"/><path d="M12 1.5L14.5 3L12.5 5M12.5 6L15 8L12.5 10M12 11L14.5 13L12 14.5" stroke="#3a9ad8" stroke-width="1" fill="none"/></svg>
<svg style="position:absolute;left:1656px;top:712px;" width="16" height="16" viewBox="0 0 16 16"><circle cx="8" cy="8" r="3.5" fill="none" stroke="#3a9ad8" stroke-width="1.3"/><path d="M0.5 4L4.5 7M0.5 12L4.5 9M11.5 8H15.5M13.5 6L15.5 8L13.5 10" stroke="#3a9ad8" stroke-width="1" fill="none"/><circle cx="1.5" cy="8" r="1" fill="#3a9ad8"/></svg>
<svg style="position:absolute;left:1656px;top:730px;" width="16" height="16" viewBox="0 0 16 16"><path d="M0.5 0.5H4V10L8 13L12 10V0.5H15.5V15.5H0.5Z" fill="#f0ea90"/><path d="M12 0.5H15.5V15.5H8V13L12 10Z" fill="#a8e0a0"/><path d="M0.5 0.5H4V10L8 13L12 10V0.5H15.5" stroke="#8a8a50" stroke-width="0.6" fill="none"/></svg>
<svg style="position:absolute;left:1656px;top:748px;" width="16" height="16" viewBox="0 0 16 16"><path d="M0.5 0.5H8L10 2.5V13.5H0.5Z" fill="#fff" stroke="#aaa"/><circle cx="8.5" cy="8.5" r="4.2" fill="#e8f4fa" stroke="#4aa0c8" stroke-width="1.4"/><rect x="8" y="13" width="7" height="3" fill="#888"/></svg>
<div style="position:absolute;left:1621px;top:765px;width:282px;height:8px;overflow:hidden;"><svg style="position:absolute;left:19px;top:1px" width="16" height="16" viewBox="0 0 16 16"><path d="M0.5 3.5H5L6 2H15.5V15.5H0.5Z" fill="#fff" stroke="#333" stroke-width="0.9"/><rect x="3" y="6" width="10" height="6" fill="#4a90d0"/></svg><div class="t" style="left:40px;top:0px;font-size:12.3px;transform:scaleX(0.91);transform-origin:0 0;">Joiners</div></div>
<svg style="position:absolute;left:355px;top:775px;" width="24" height="24" viewBox="0 0 24 24"><path d="M1.5 7V19M1.5 7H4M1.5 13H4M1.5 19H4M12 19H15" stroke="#444" stroke-width="1.2" fill="none"/><rect x="3.5" y="4.5" width="7" height="4" rx="0.8" fill="#fde59a" stroke="#444" stroke-width="1"/><rect x="3.5" y="10.5" width="7" height="4" rx="0.8" fill="#fde59a" stroke="#444" stroke-width="1"/><rect x="3.5" y="16.5" width="7" height="4" rx="0.8" fill="#fde59a" stroke="#444" stroke-width="1"/><circle cx="15.5" cy="8" r="7.6" fill="#35b056" stroke="#1f8a3a" stroke-width="0.8"/><path d="M10.2 2.7L20.8 13.3M20.8 2.7L10.2 13.3" stroke="#1f7a34" stroke-width="0.9"/><rect x="15.5" y="18.5" width="7" height="4" rx="1" fill="#8cc6f0" stroke="#444" stroke-width="1"/></svg>
<svg style="position:absolute;left:422px;top:775px;" width="24" height="24" viewBox="0 0 24 24"><defs><linearGradient id="sg" x1="0" y1="0" x2="1" y2="1"><stop offset="0" stop-color="#d4d4d4"/><stop offset="1" stop-color="#f8f8f8"/></linearGradient></defs><path d="M0.5 0.5H12L12.5 5H17.5V23.5H0.5Z" fill="url(#sg)" stroke="#dcdcdc"/><path d="M9.5 12L6.5 15.5L9.5 19M18 12L21 15.5L18 19M15 11.5L12.5 20" stroke="#6a6a6a" stroke-width="1" fill="none"/></svg>
<svg style="position:absolute;left:354px;top:814px;" width="16" height="16" viewBox="0 0 16 16"><path d="M0.5 0.5H10L13 3V13.5H0.5Z" fill="#e4eefa" stroke="#7a8ab0"/><path d="M0.5 7.5H10M7 0.5V13.5" stroke="#7a8ab0" stroke-width="0.8"/><circle cx="4" cy="4" r="2.2" fill="#e02030"/><path d="M2 13L4 9L6 13Z" fill="#f8b020"/></svg>
<svg style="position:absolute;left:435px;top:814px;" width="16" height="16" viewBox="0 0 16 16"><rect x="0.5" y="0.5" width="13" height="13" fill="#f2f6fb" stroke="#3f5a8a"/><path d="M0.5 3H13.5" stroke="#3f5a8a" stroke-width="2"/><path d="M1 6.5H13M1 9H13M1 11.5H13M4.5 4V13" stroke="#9aaac8" stroke-width="0.8"/></svg>
<svg style="position:absolute;left:518px;top:814px;" width="16" height="16" viewBox="0 0 16 16"><rect x="1" y="0.8" width="13" height="10" rx="1.8" fill="#e8f4fc" stroke="#2f66b3" stroke-width="1.6"/><path d="M3.5 4H8M3.5 6.5H11" stroke="#3a5aa0" stroke-width="1"/><path d="M6.5 11V13M3 13.6H12" stroke="#2f66b3" stroke-width="1.6"/></svg>
<svg style="position:absolute;left:589px;top:817px;" width="10" height="10" viewBox="0 0 10 10"><path d="M0.8 0.8L9.2 9.2M9.2 0.8L0.8 9.2" stroke="#111" stroke-width="1.25"/></svg>
<svg style="position:absolute;left:611px;top:814px;" width="16" height="16" viewBox="0 0 16 16"><circle cx="6" cy="6" r="4.8" fill="#e6ecf2" stroke="#a09a78" stroke-width="1"/><path d="M9.5 9.5L13.5 13.5" stroke="#6a4a3a" stroke-width="2"/></svg>
<svg style="position:absolute;left:716px;top:813px;" width="17" height="17" viewBox="0 0 17 17"><circle cx="8.5" cy="8.5" r="8" fill="#35b056" stroke="#1f8a3a" stroke-width="0.9"/><path d="M2.8 2.8L14.2 14.2M14.2 2.8L2.8 14.2" stroke="#1f7a34" stroke-width="1"/></svg>
<svg style="position:absolute;left:1030px;top:815px;" width="16" height="16" viewBox="0 0 16 16"><rect x="0.5" y="0.5" width="11" height="11" fill="#a8a8a8" stroke="#bdbdbd"/><rect x="1.5" y="2" width="9" height="8" fill="#9a9a9a"/></svg>
<svg style="position:absolute;left:1052px;top:813px;" width="16" height="16" viewBox="0 0 16 16"><path d="M2 2L12 12M12 2L2 12" stroke="#8a8a8a" stroke-width="3.2" stroke-linecap="round"/></svg>
<div style="position:absolute;left:1073px;top:811px;width:1px;height:18px;background:#8d8d8d;"></div>
<svg style="position:absolute;left:1083px;top:812px;" width="16" height="16" viewBox="0 0 16 16"><path d="M0.5 0.5H7L10 3.5V13.5H0.5Z" fill="#f8f4e8" stroke="#c8b888"/><path d="M2 4H7M2 6H8M2 8H8M2 10H6" stroke="#4a6aaa" stroke-width="0.9"/><path d="M9 10L14.5 15M14.5 10L9 15" stroke="#8a8a8a" stroke-width="2"/></svg>
<svg style="position:absolute;left:1106px;top:812px;" width="16" height="16" viewBox="0 0 16 16"><rect x="1.5" y="0.5" width="13" height="15" fill="#e4eefa" stroke="#8a9ab8"/><path d="M10.5 0.5V15.5" stroke="#8a9ab8"/><rect x="11.5" y="2.5" width="2" height="2" fill="#3a5a9a"/><rect x="11.5" y="10" width="2" height="2" fill="#3a5a9a"/><rect x="0.5" y="9" width="7" height="6.5" rx="1" fill="#f0c050" stroke="#a87a20"/><path d="M2 9V7Q4 4 6 7V9" stroke="#a87a20" stroke-width="1.2" fill="none"/></svg>
<svg style="position:absolute;left:1129px;top:812px;" width="16" height="16" viewBox="0 0 16 16"><path d="M0.5 0.5H7L10 3.5V13.5H0.5Z" fill="#f8f4e8" stroke="#c8b888"/><path d="M2 4H7M2 6H8M2 8H8M2 10H6" stroke="#4a6aaa" stroke-width="0.9"/><path d="M13.5 4V10H8.5V8L6 11L8.5 14V12H15.5V4Z" fill="#fde08a" stroke="#c4860e" stroke-width="0.9"/></svg>
<div style="position:absolute;left:1150px;top:811px;width:1px;height:18px;background:#8d8d8d;"></div>
<svg style="position:absolute;left:1161px;top:813px;" width="16" height="16" viewBox="0 0 16 16"><rect x="0.5" y="3.5" width="13" height="10.5" fill="#eaf5fc" stroke="#8c7a52"/><rect x="1" y="4" width="12" height="2" fill="#3b9be3"/><path d="M6 11L10 6" stroke="#555" stroke-width="1"/><path d="M9 5L12 0.5L15 3.5L11 7Z" fill="#2ea84a"/></svg>
<svg style="position:absolute;left:1184px;top:813px;" width="16" height="16" viewBox="0 0 16 16"><rect x="1" y="0.8" width="13" height="10" rx="1.8" fill="#e8f4fc" stroke="#2f66b3" stroke-width="1.6"/><path d="M3.5 4H8M3.5 6.5H11" stroke="#3a5aa0" stroke-width="1"/><path d="M6.5 11V13M3 13.6H12" stroke="#2f66b3" stroke-width="1.6"/></svg>
<svg style="position:absolute;left:1205px;top:818px;" width="16" height="16" viewBox="0 0 16 16"><path d="M0 0H7.5L3.75 4Z" fill="#1e1e1e"/></svg>
<svg style="position:absolute;left:1221px;top:812px;" width="16" height="16" viewBox="0 0 16 16"><rect x="0.5" y="2.5" width="13" height="11.5" fill="#eef7fe" stroke="#9e8a5c"/><rect x="1" y="3" width="12" height="2" fill="#3b9be3"/><path d="M3 13.5Q10 13 12 6" stroke="#f0dca0" stroke-width="1.2" fill="none"/><path d="M11.5 0L13 3L16 4.5L13 6L11.5 9L10 6L7 4.5L10 3Z" fill="#fff" stroke="#c09a35" stroke-width="1"/></svg>
<svg style="position:absolute;left:1244px;top:818px;" width="16" height="16" viewBox="0 0 16 16"><path d="M0 0H7.5L3.75 4Z" fill="#1e1e1e"/></svg>
<svg style="position:absolute;left:1261px;top:815px;" width="10" height="4" viewBox="0 0 10 4"><rect x="0.5" y="0.5" width="9" height="3" fill="#fff" stroke="#000" stroke-width="1"/></svg>
<svg style="position:absolute;left:1284px;top:815px;" width="11" height="11" viewBox="0 0 11 11"><rect x="0.5" y="0.5" width="10" height="10" fill="none" stroke="#000" stroke-width="1.1"/><path d="M0.5 2.5H10.5" stroke="#000"/></svg>
<svg style="position:absolute;left:1314px;top:812px;" width="16" height="16" viewBox="0 0 16 16"><circle cx="5.5" cy="5.5" r="4" fill="#fbe6b8" stroke="#d8a860" stroke-width="1.4" stroke-dasharray="1.5 1"/><circle cx="10" cy="10" r="4.5" fill="#fbe0a8" stroke="#c88a3a" stroke-width="1.6" stroke-dasharray="1.6 1"/><circle cx="10" cy="10" r="1.3" fill="#fff" stroke="#c88a3a" stroke-width="0.8"/></svg>
<svg style="position:absolute;left:1394px;top:817px;" width="10" height="10" viewBox="0 0 10 10"><path d="M0.8 0.8L9.2 9.2M9.2 0.8L0.8 9.2" stroke="#111" stroke-width="1.25"/></svg>
<svg style="position:absolute;left:1417px;top:813px;" width="16" height="16" viewBox="0 0 16 16"><rect x="3.5" y="0.5" width="7" height="11" fill="#fbe8b0" stroke="#b88a3a"/><rect x="0.5" y="3.5" width="8" height="12" fill="#f4f8fc" stroke="#7a8aa8"/><path d="M2 7H7M2 9H7M2 11H7M2 13H6" stroke="#7a8aa8" stroke-width="0.8"/></svg>
<svg style="position:absolute;left:1628px;top:813px;" width="16" height="16" viewBox="0 0 16 16"><path d="M0.5 4H6L9 7M0.5 10H6L9 7" stroke="#555" stroke-width="0.9" fill="none"/><path d="M1 7H8V4.5L14.5 8L8 11.5V9H1Z" fill="#fde59a" stroke="#c4860e" stroke-width="0.9"/><path d="M5 1V15" stroke="#555" stroke-width="0.8"/></svg>
<svg style="position:absolute;left:1650px;top:818px;" width="16" height="16" viewBox="0 0 16 16"><path d="M0 0H7.5L3.75 4Z" fill="#1e1e1e"/></svg>
<svg style="position:absolute;left:1666px;top:813px;" width="16" height="16" viewBox="0 0 16 16"><rect x="0.5" y="2.5" width="11" height="11" fill="#e8f2fb" stroke="#7a9ac0"/><rect x="3.5" y="0.5" width="11" height="11" fill="#eef6fc" stroke="#5a7ab0"/><path d="M9 3V9M6 6H12" stroke="#1a3f88" stroke-width="1.3"/></svg>
<svg style="position:absolute;left:1689px;top:813px;" width="16" height="16" viewBox="0 0 16 16"><rect x="0.5" y="2.5" width="11" height="11" fill="#e8f2fb" stroke="#7a9ac0"/><rect x="3.5" y="0.5" width="11" height="11" fill="#eef6fc" stroke="#5a7ab0"/><path d="M6 6H12" stroke="#1a3f88" stroke-width="1.3"/></svg>
<svg style="position:absolute;left:1712px;top:812px;" width="16" height="16" viewBox="0 0 16 16"><rect x="0.5" y="0.5" width="14" height="15" fill="#f0f0f0" stroke="#c0c0c0"/><path d="M10 0.5V15.5" stroke="#c0c0c0"/><rect x="11.5" y="2.5" width="2" height="2" fill="#aaa"/><rect x="11.5" y="10" width="2" height="2" fill="#aaa"/><path d="M1 15V9L4 7L7 9V15Z" fill="#ddd" stroke="#b0b0b0"/></svg>
<div style="position:absolute;left:1733px;top:811px;width:1px;height:18px;background:#8d8d8d;"></div>
<svg style="position:absolute;left:1741px;top:812px;" width="16" height="16" viewBox="0 0 16 16"><circle cx="9.00" cy="3.62" r="3.12" fill="#1d8d39"/><circle cx="11.88" cy="6.50" r="3.12" fill="#1d8d39"/><circle cx="9.00" cy="9.38" r="3.12" fill="#1d8d39"/><circle cx="6.12" cy="6.50" r="3.12" fill="#1d8d39"/><circle cx="9.00" cy="3.62" r="2.22" fill="#37b158"/><circle cx="11.88" cy="6.50" r="2.22" fill="#37b158"/><circle cx="9.00" cy="9.38" r="2.22" fill="#37b158"/><circle cx="6.12" cy="6.50" r="2.22" fill="#37b158"/><circle cx="9.00" cy="6.50" r="0.84" fill="#fff"/><rect x="0.5" y="9.5" width="5" height="4" rx="0.8" fill="#8ee07a" stroke="#333" stroke-width="0.9"/><rect x="8.5" y="11.5" width="6" height="4" rx="0.8" fill="#fff3a0" stroke="#333" stroke-width="0.9"/></svg>
<svg style="position:absolute;left:1767px;top:813px;" width="16" height="16" viewBox="0 0 16 16"><rect x="1" y="0.8" width="13" height="10" rx="1.8" fill="#e8f4fc" stroke="#2f66b3" stroke-width="1.6"/><path d="M3.5 4H8M3.5 6.5H11" stroke="#3a5aa0" stroke-width="1"/><path d="M6.5 11V13M3 13.6H12" stroke="#2f66b3" stroke-width="1.6"/></svg>
<div style="position:absolute;left:1787px;top:811px;width:1px;height:18px;background:#8d8d8d;"></div>
<svg style="position:absolute;left:1796px;top:812px;" width="16" height="16" viewBox="0 0 16 16"><rect x="10" y="1" width="6" height="14" fill="#9b9b9b"/><rect x="12.5" y="2.5" width="1" height="1" fill="#33dd33"/><rect x="12.5" y="6" width="1" height="1" fill="#33dd33"/><rect x="12.5" y="9.5" width="1" height="1" fill="#33dd33"/><rect x="12.5" y="13" width="1" height="1" fill="#33dd33"/><circle cx="6.50" cy="3.52" r="3.22" fill="#1d8d39"/><circle cx="9.48" cy="6.50" r="3.22" fill="#1d8d39"/><circle cx="6.50" cy="9.48" r="3.22" fill="#1d8d39"/><circle cx="3.52" cy="6.50" r="3.22" fill="#1d8d39"/><circle cx="6.50" cy="3.52" r="2.32" fill="#37b158"/><circle cx="9.48" cy="6.50" r="2.32" fill="#37b158"/><circle cx="6.50" cy="9.48" r="2.32" fill="#37b158"/><circle cx="3.52" cy="6.50" r="2.32" fill="#37b158"/><circle cx="6.50" cy="6.50" r="0.87" fill="#fff"/><path d="M4.5 10L6.5 12L4.5 14L2.5 12Z" fill="#ffe066" stroke="#b8901c" stroke-width="0.8"/><path d="M9.5 8L11.5 10L9.5 12L7.5 10Z" fill="#ffe066" stroke="#b8901c" stroke-width="0.8"/></svg>
<svg style="position:absolute;left:1822px;top:815px;" width="16" height="16" viewBox="0 0 16 16"><rect x="0.5" y="0.5" width="11" height="11" fill="#a8a8a8" stroke="#bdbdbd"/><rect x="1.5" y="2" width="9" height="8" fill="#9a9a9a"/></svg>
<div style="position:absolute;left:1841px;top:811px;width:1px;height:18px;background:#8d8d8d;"></div>
<svg style="position:absolute;left:1852px;top:813px;" width="16" height="16" viewBox="0 0 16 16"><path d="M2 2L12 12M12 2L2 12" stroke="#8a8a8a" stroke-width="3.2" stroke-linecap="round"/></svg>
<svg style="position:absolute;left:1876px;top:815px;" width="10" height="4" viewBox="0 0 10 4"><rect x="0.5" y="0.5" width="9" height="3" fill="#fff" stroke="#000" stroke-width="1"/></svg>
<svg style="position:absolute;left:1898px;top:815px;" width="11" height="11" viewBox="0 0 11 11"><rect x="0.5" y="0.5" width="10" height="10" fill="none" stroke="#000" stroke-width="1.1"/><path d="M0.5 2.5H10.5" stroke="#000"/></svg>
<svg style="position:absolute;left:1329px;top:858px;" width="16" height="16" viewBox="0 0 16 16"><circle cx="9.00" cy="3.62" r="3.12" fill="#1d8d39"/><circle cx="11.88" cy="6.50" r="3.12" fill="#1d8d39"/><circle cx="9.00" cy="9.38" r="3.12" fill="#1d8d39"/><circle cx="6.12" cy="6.50" r="3.12" fill="#1d8d39"/><circle cx="9.00" cy="3.62" r="2.22" fill="#37b158"/><circle cx="11.88" cy="6.50" r="2.22" fill="#37b158"/><circle cx="9.00" cy="9.38" r="2.22" fill="#37b158"/><circle cx="6.12" cy="6.50" r="2.22" fill="#37b158"/><circle cx="9.00" cy="6.50" r="0.84" fill="#fff"/><rect x="0.5" y="9.5" width="5" height="4" rx="0.8" fill="#8ee07a" stroke="#333" stroke-width="0.9"/><rect x="8.5" y="11.5" width="6" height="4" rx="0.8" fill="#fff3a0" stroke="#333" stroke-width="0.9"/></svg>
<svg style="position:absolute;left:1633px;top:859px;" width="16" height="16" viewBox="0 0 16 16"><circle cx="7.5" cy="7.5" r="7" fill="#5cc85c" stroke="#3a9a3a" stroke-width="0.8"/><circle cx="7.5" cy="6" r="5" fill="#8ee08e" opacity="0.6"/><path d="M4 7.8L6.5 10.3L11.2 5" stroke="#fff" stroke-width="1.8" fill="none"/></svg>
<svg style="position:absolute;left:1527px;top:1139px;" width="16" height="16" viewBox="0 0 16 16"><rect x="-1" y="1" width="2" height="2" fill="#bfb6a4"/><rect x="-1" y="5" width="2" height="2" fill="#bfb6a4"/><rect x="-1" y="9" width="2" height="2" fill="#bfb6a4"/><rect x="-1" y="13" width="2" height="2" fill="#bfb6a4"/></svg>
<svg style="position:absolute;left:1813px;top:1139px;" width="16" height="16" viewBox="0 0 16 16"><rect x="-1" y="1" width="2" height="2" fill="#bfb6a4"/><rect x="-1" y="5" width="2" height="2" fill="#bfb6a4"/><rect x="-1" y="9" width="2" height="2" fill="#bfb6a4"/><rect x="-1" y="13" width="2" height="2" fill="#bfb6a4"/></svg>
<svg style="position:absolute;left:1820px;top:1138px;" width="16" height="16" viewBox="0 0 16 16"><rect x="0.5" y="0.5" width="8" height="13" fill="#f4f4f4" stroke="#8a8a8a"/><rect x="2" y="2" width="3" height="2" fill="#3a8a3a"/><circle cx="9" cy="8.5" r="3.4" fill="#35b056" stroke="#1f8a3a" stroke-width="0.8"/><circle cx="12.2" cy="11.5" r="3.4" fill="#35b056" stroke="#1f8a3a" stroke-width="0.8"/><circle cx="9" cy="14.5" r="3.4" fill="#35b056" stroke="#1f8a3a" stroke-width="0.8"/><circle cx="5.8" cy="11.5" r="3.4" fill="#35b056" stroke="#1f8a3a" stroke-width="0.8"/><circle cx="9" cy="11.5" r="3.5" fill="#35b056"/></svg>
<svg style="position:absolute;left:1843px;top:1145px;" width="16" height="16" viewBox="0 0 16 16"><path d="M0 0H7.5L3.75 4Z" fill="#1e1e1e"/></svg>
<svg style="position:absolute;left:1894px;top:1139px;" width="16" height="16" viewBox="0 0 16 16"><rect x="-1" y="1" width="2" height="2" fill="#bfb6a4"/><rect x="-1" y="5" width="2" height="2" fill="#bfb6a4"/><rect x="-1" y="9" width="2" height="2" fill="#bfb6a4"/><rect x="-1" y="13" width="2" height="2" fill="#bfb6a4"/></svg>
<svg style="position:absolute;left:1904px;top:1139px;" width="10" height="16" viewBox="0 0 10 16"><path d="M5 0.5Q9.5 0.5 9.5 5Q9.5 8 7.5 10V12H2.5V10Q0.5 8 0.5 5Q0.5 0.5 5 0.5Z" fill="#fde27a" stroke="#e0b030" stroke-width="0.9"/><rect x="2.5" y="12" width="5" height="3.5" fill="#9aaac0" stroke="#6a7a90" stroke-width="0.6"/></svg>
<svg style="position:absolute;left:20px;top:711px;" width="16" height="16" viewBox="0 0 16 16"><path d="M0.5 3.5H4L5 1.5H9" stroke="#555" fill="none"/><rect x="0.5" y="3.5" width="15" height="12" rx="1.5" fill="#fff" stroke="#555"/><circle cx="9.5" cy="6.5" r="5.6" fill="#3cbc5c"/><path d="M5.8 2.8L13.2 10.2M13.2 2.8L5.8 10.2" stroke="#fff" stroke-width="0.8"/></svg>
<svg style="position:absolute;left:10px;top:715px;" width="6" height="10" viewBox="0 0 6 10"><path d="M0.8 0.8L4.5 4.5L0.8 8.2" fill="none" stroke="#a3a3a3" stroke-width="1.4"/></svg>
<svg style="position:absolute;left:20px;top:729px;" width="16" height="16" viewBox="0 0 16 16"><rect x="8.5" y="0.5" width="7" height="11" fill="#eef2fa" stroke="#6a7aa8"/><path d="M10 3H14M10 5H14M10 7H14" stroke="#6a7aa8" stroke-width="0.8"/><path d="M1 9L6 4L11 9L6 14Z" fill="#4a80d0" stroke="#2a5098"/><path d="M9 14L14 6" stroke="#e09030" stroke-width="2"/></svg>
<svg style="position:absolute;left:8px;top:735px;" width="10" height="6" viewBox="0 0 10 6"><path d="M0.8 0.8L4.5 4.5L8.2 0.8" fill="none" stroke="#3c3c3c" stroke-width="1.4"/></svg>
<svg style="position:absolute;left:36px;top:747px;" width="16" height="16" viewBox="0 0 16 16"><rect x="0.5" y="0.5" width="10" height="13" fill="#f4f6fa" stroke="#8a9ab8"/><path d="M2 3H9M2 5H9M2 7H9M2 9H9M4 2V12" stroke="#9aaac8" stroke-width="0.8"/><path d="M8 15L13 8" stroke="#e08a20" stroke-width="2"/></svg>
<svg style="position:absolute;left:20px;top:765px;" width="16" height="16" viewBox="0 0 16 16"><rect x="0.5" y="0.5" width="15" height="9" rx="1" fill="#f8e890" stroke="#b8a040"/><path d="M2.5 4V14Q8 16.5 13.5 14V4Z" fill="#5ab0e8" stroke="#2a6aa8"/><ellipse cx="8" cy="4" rx="5.5" ry="2" fill="#aad8f8" stroke="#2a6aa8"/></svg>
<svg style="position:absolute;left:20px;top:783px;" width="16" height="16" viewBox="0 0 16 16"><text x="0" y="7" font-size="7.5" font-weight="bold" fill="#3a5aa0" font-family="Liberation Sans">X=Y</text><text x="0" y="15" font-size="7.5" font-weight="bold" fill="#3a5aa0" font-family="Liberation Sans">A=1</text></svg>
<svg style="position:absolute;left:10px;top:787px;" width="6" height="10" viewBox="0 0 6 10"><path d="M0.8 0.8L4.5 4.5L0.8 8.2" fill="none" stroke="#a3a3a3" stroke-width="1.4"/></svg>
<svg style="position:absolute;left:20px;top:801px;" width="16" height="16" viewBox="0 0 16 16"><circle cx="3.5" cy="3.5" r="3.2" fill="#2a8a4a"/><circle cx="11.5" cy="3.5" r="3.2" fill="#fff" stroke="#7a4aa8" stroke-width="0.9"/><circle cx="7.5" cy="11.5" r="3.2" fill="#2a7ac8"/></svg>
<svg style="position:absolute;left:20px;top:819px;" width="16" height="16" viewBox="0 0 16 16"><path d="M1.5 2.5H14.5V11L8 14L1.5 11Z" fill="#fff" stroke="#444" stroke-width="1"/><path d="M5 5H13M6 7.5H13M7 10H12" stroke="#3a8ad0" stroke-width="0.9"/><rect x="0.5" y="1" width="3" height="7" fill="#fff" stroke="#444" stroke-width="0.8"/></svg>
<svg style="position:absolute;left:20px;top:837px;" width="16" height="16" viewBox="0 0 16 16"><rect x="0.5" y="1.5" width="12" height="14" rx="1" fill="#fdf0c0" stroke="#555"/><path d="M4 12L14 1.5" stroke="#e08a20" stroke-width="2.5"/></svg>
<svg style="position:absolute;left:20px;top:855px;" width="16" height="16" viewBox="0 0 16 16"><path d="M0.5 6V14.5H15.5V6" stroke="#2a6ad0" stroke-width="1.5" fill="none"/><path d="M2 6L7 11L14 2" stroke="#2a6ad0" stroke-width="1.4" fill="none"/><path d="M12 2H15V5" stroke="#e02020" stroke-width="1.2" fill="none"/></svg>
<svg style="position:absolute;left:20px;top:873px;" width="16" height="16" viewBox="0 0 16 16"><circle cx="7" cy="7" r="6.3" fill="#fff" stroke="#555" stroke-width="0.9"/><path d="M4.5 3.5L10.5 7L4.5 10.5Z" fill="#2ac82a"/><rect x="9" y="9" width="7" height="7" fill="#777"/><rect x="12" y="11" width="1.5" height="1.5" fill="#3c3"/><rect x="12" y="14" width="1.5" height="1.5" fill="#3c3"/></svg>
<div style="position:absolute;left:921px;top:368px;width:52px;height:18px;box-sizing:border-box;background:rgba(210,218,226,0.6);border:1px solid rgba(170,190,210,0.7);"></div>
<svg style="position:absolute;left:928px;top:369px;opacity:0.55;" width="16" height="16" viewBox="0 0 16 16"><path d="M0.5 7.5H15" stroke="#666" stroke-width="1"/><path d="M3.5 6L12.5 6L9.5 11H6.5Z" fill="#c8c8c8" stroke="#777" stroke-width="0.7"/><circle cx="6" cy="3" r="1.4" fill="#5ac85a"/><circle cx="9.5" cy="2" r="1.4" fill="#e86a7a"/><circle cx="11.5" cy="4.5" r="1.3" fill="#5aaae8"/><circle cx="7" cy="13" r="1.5" fill="#5ac85a"/><circle cx="10" cy="14" r="1.5" fill="#5ac85a"/></svg>
<div style="position:absolute;left:940px;top:374px;width:28px;height:8px;background:rgba(255,255,255,0.5);"></div>
<div style="position:absolute;left:921px;top:371px;width:52px;height:3px;background:#000;"></div>
<svg style="position:absolute;left:955px;top:372px;" width="30" height="32" viewBox="0 0 30 32"><path d="M3.5 1.5V15.5L6.8 12.5L9.5 18.5L12 17.3L9.5 11.5H14Z" fill="#fff" stroke="#000" stroke-width="1" stroke-linejoin="miter"/><rect x="5.5" y="16.5" width="13" height="8" fill="none" stroke="#000" stroke-width="1.2" stroke-dasharray="1 1" shape-rendering="crispEdges"/><rect x="13.5" y="20.5" width="10" height="10" fill="#fff" stroke="#000" stroke-width="1.2"/><path d="M18.5 22.5V28.5M15.5 25.5H21.5" stroke="#000" stroke-width="1.1"/></svg>
</body></html>
